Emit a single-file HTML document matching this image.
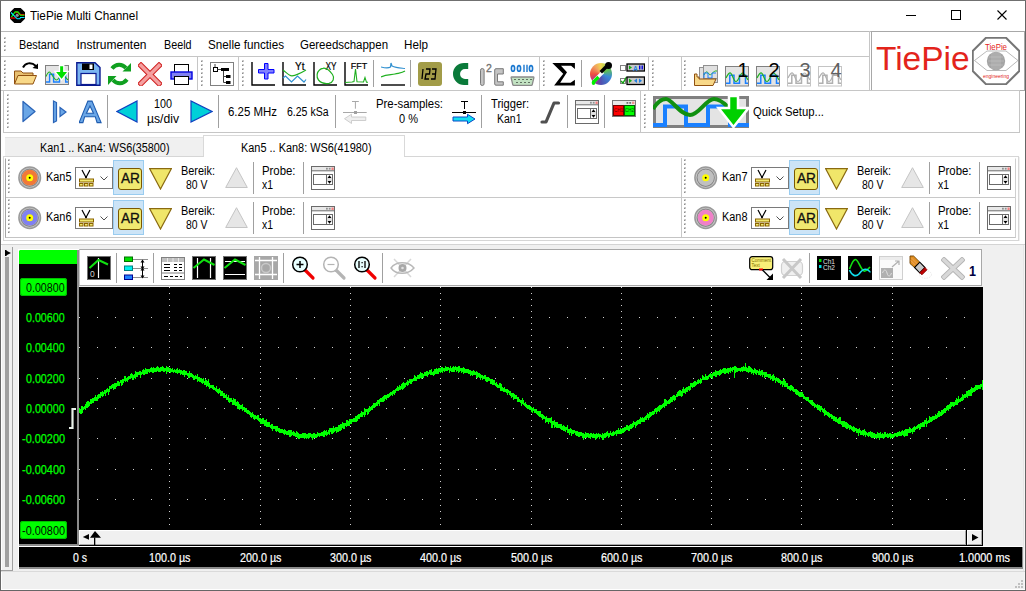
<!DOCTYPE html><html><head><meta charset="utf-8"><style>html,body{margin:0;padding:0;width:1026px;height:591px;overflow:hidden;background:#fff;}body{position:relative;font-family:"Liberation Sans",sans-serif;}div,span,svg{position:absolute;}span{white-space:nowrap;transform-origin:0 0;}</style></head><body><div style="left:0px;top:0px;width:1026px;height:591px;background:#ffffff;"></div><div style="left:1px;top:244px;width:1024px;height:346px;background:#f0f0f0;"></div><div style="left:1023px;top:245px;width:1px;height:326px;background:#e6e6e6;"></div><div style="left:1024px;top:245px;width:1px;height:345px;background:#f6f6f6;"></div><svg style="left:10px;top:7.5px;" width="15" height="15" viewBox="0 0 15 15"><polygon points="4.3,0 10.7,0 15,4.3 15,10.7 10.7,15 4.3,15 0,10.7 0,4.3" fill="#000"/><path d="M0.3,10 H5.7" stroke="#ff0000" stroke-width="1.2"/><path d="M5.3,4.5 H8.2 L10.5,6.8 H14.5" stroke="#ff0000" stroke-width="1.4" fill="none"/><path d="M1.4,9.1 L5.1,3.9 H7.9 L10.5,7.3 H14.5" stroke="#00ff00" stroke-width="1.1" fill="none"/><path d="M1,4.5 L7.2,10.8 H9.8 L10.5,9.5 H14.5" stroke="#00e8ff" stroke-width="1.1" fill="none"/><circle cx="7.2" cy="7.3" r="1.6" fill="#909090"/></svg><span style="left:30.00px;top:9.54px;font-size:12px;line-height:12px;color:#000;transform:scaleX(0.9794);">TiePie Multi Channel</span><div style="left:906px;top:15px;width:10px;height:1px;background:#000;"></div><div style="left:951px;top:10px;width:10px;height:10px;background:transparent;border:1px solid #000;box-sizing:border-box;"></div><svg style="left:997px;top:10px;" width="10" height="10" viewBox="0 0 10 10"><path d="M0.5,0.5 L9.5,9.5 M9.5,0.5 L0.5,9.5" stroke="#000" stroke-width="1.1"/></svg><div style="left:1px;top:31px;width:1024px;height:1px;background:#b9b9b9;"></div><div style="left:1px;top:56px;width:869px;height:1px;background:#c6c6c6;"></div><div style="left:1px;top:90px;width:869px;height:1px;background:#c6c6c6;"></div><div style="left:869px;top:31px;width:1px;height:60px;background:#c6c6c6;"></div><div style="left:871px;top:31px;width:154px;height:60px;background:#fff;border:1px solid #a8a8a8;box-sizing:border-box;"></div><svg style="left:4px;top:37px;" width="2" height="16" viewBox="0 0 2 16"><rect x="0" y="0" width="2" height="2" fill="#c8c8c8"/><rect x="0" y="1" width="1" height="1" fill="#8c8c8c"/><rect x="0" y="4" width="2" height="2" fill="#c8c8c8"/><rect x="0" y="5" width="1" height="1" fill="#8c8c8c"/><rect x="0" y="8" width="2" height="2" fill="#c8c8c8"/><rect x="0" y="9" width="1" height="1" fill="#8c8c8c"/><rect x="0" y="12" width="2" height="2" fill="#c8c8c8"/><rect x="0" y="13" width="1" height="1" fill="#8c8c8c"/></svg><span style="left:19.00px;top:38.84px;font-size:12px;line-height:12px;color:#000;transform:scaleX(0.9085);">Bestand</span><span style="left:76.50px;top:38.84px;font-size:12px;line-height:12px;color:#000;">Instrumenten</span><span style="left:163.50px;top:38.84px;font-size:12px;line-height:12px;color:#000;transform:scaleX(0.8961);">Beeld</span><span style="left:208.00px;top:38.84px;font-size:12px;line-height:12px;color:#000;transform:scaleX(0.9738);">Snelle functies</span><span style="left:300.00px;top:38.84px;font-size:12px;line-height:12px;color:#000;transform:scaleX(0.9559);">Gereedschappen</span><span style="left:404.00px;top:38.84px;font-size:12px;line-height:12px;color:#000;transform:scaleX(0.9725);">Help</span><div style="left:197px;top:57px;width:1px;height:33px;background:#c6c6c6;"></div><div style="left:238px;top:57px;width:1px;height:33px;background:#c6c6c6;"></div><div style="left:539px;top:57px;width:1px;height:33px;background:#c6c6c6;"></div><div style="left:648px;top:57px;width:1px;height:33px;background:#c6c6c6;"></div><div style="left:681px;top:57px;width:1px;height:33px;background:#c6c6c6;"></div><svg style="left:4px;top:60px;" width="2" height="27" viewBox="0 0 2 27"><rect x="0" y="0" width="2" height="2" fill="#c8c8c8"/><rect x="0" y="1" width="1" height="1" fill="#8c8c8c"/><rect x="0" y="4" width="2" height="2" fill="#c8c8c8"/><rect x="0" y="5" width="1" height="1" fill="#8c8c8c"/><rect x="0" y="8" width="2" height="2" fill="#c8c8c8"/><rect x="0" y="9" width="1" height="1" fill="#8c8c8c"/><rect x="0" y="12" width="2" height="2" fill="#c8c8c8"/><rect x="0" y="13" width="1" height="1" fill="#8c8c8c"/><rect x="0" y="16" width="2" height="2" fill="#c8c8c8"/><rect x="0" y="17" width="1" height="1" fill="#8c8c8c"/><rect x="0" y="20" width="2" height="2" fill="#c8c8c8"/><rect x="0" y="21" width="1" height="1" fill="#8c8c8c"/><rect x="0" y="24" width="2" height="2" fill="#c8c8c8"/><rect x="0" y="25" width="1" height="1" fill="#8c8c8c"/></svg><svg style="left:201px;top:60px;" width="2" height="27" viewBox="0 0 2 27"><rect x="0" y="0" width="2" height="2" fill="#c8c8c8"/><rect x="0" y="1" width="1" height="1" fill="#8c8c8c"/><rect x="0" y="4" width="2" height="2" fill="#c8c8c8"/><rect x="0" y="5" width="1" height="1" fill="#8c8c8c"/><rect x="0" y="8" width="2" height="2" fill="#c8c8c8"/><rect x="0" y="9" width="1" height="1" fill="#8c8c8c"/><rect x="0" y="12" width="2" height="2" fill="#c8c8c8"/><rect x="0" y="13" width="1" height="1" fill="#8c8c8c"/><rect x="0" y="16" width="2" height="2" fill="#c8c8c8"/><rect x="0" y="17" width="1" height="1" fill="#8c8c8c"/><rect x="0" y="20" width="2" height="2" fill="#c8c8c8"/><rect x="0" y="21" width="1" height="1" fill="#8c8c8c"/><rect x="0" y="24" width="2" height="2" fill="#c8c8c8"/><rect x="0" y="25" width="1" height="1" fill="#8c8c8c"/></svg><svg style="left:242px;top:60px;" width="2" height="27" viewBox="0 0 2 27"><rect x="0" y="0" width="2" height="2" fill="#c8c8c8"/><rect x="0" y="1" width="1" height="1" fill="#8c8c8c"/><rect x="0" y="4" width="2" height="2" fill="#c8c8c8"/><rect x="0" y="5" width="1" height="1" fill="#8c8c8c"/><rect x="0" y="8" width="2" height="2" fill="#c8c8c8"/><rect x="0" y="9" width="1" height="1" fill="#8c8c8c"/><rect x="0" y="12" width="2" height="2" fill="#c8c8c8"/><rect x="0" y="13" width="1" height="1" fill="#8c8c8c"/><rect x="0" y="16" width="2" height="2" fill="#c8c8c8"/><rect x="0" y="17" width="1" height="1" fill="#8c8c8c"/><rect x="0" y="20" width="2" height="2" fill="#c8c8c8"/><rect x="0" y="21" width="1" height="1" fill="#8c8c8c"/><rect x="0" y="24" width="2" height="2" fill="#c8c8c8"/><rect x="0" y="25" width="1" height="1" fill="#8c8c8c"/></svg><svg style="left:543px;top:60px;" width="2" height="27" viewBox="0 0 2 27"><rect x="0" y="0" width="2" height="2" fill="#c8c8c8"/><rect x="0" y="1" width="1" height="1" fill="#8c8c8c"/><rect x="0" y="4" width="2" height="2" fill="#c8c8c8"/><rect x="0" y="5" width="1" height="1" fill="#8c8c8c"/><rect x="0" y="8" width="2" height="2" fill="#c8c8c8"/><rect x="0" y="9" width="1" height="1" fill="#8c8c8c"/><rect x="0" y="12" width="2" height="2" fill="#c8c8c8"/><rect x="0" y="13" width="1" height="1" fill="#8c8c8c"/><rect x="0" y="16" width="2" height="2" fill="#c8c8c8"/><rect x="0" y="17" width="1" height="1" fill="#8c8c8c"/><rect x="0" y="20" width="2" height="2" fill="#c8c8c8"/><rect x="0" y="21" width="1" height="1" fill="#8c8c8c"/><rect x="0" y="24" width="2" height="2" fill="#c8c8c8"/><rect x="0" y="25" width="1" height="1" fill="#8c8c8c"/></svg><svg style="left:652px;top:60px;" width="2" height="27" viewBox="0 0 2 27"><rect x="0" y="0" width="2" height="2" fill="#c8c8c8"/><rect x="0" y="1" width="1" height="1" fill="#8c8c8c"/><rect x="0" y="4" width="2" height="2" fill="#c8c8c8"/><rect x="0" y="5" width="1" height="1" fill="#8c8c8c"/><rect x="0" y="8" width="2" height="2" fill="#c8c8c8"/><rect x="0" y="9" width="1" height="1" fill="#8c8c8c"/><rect x="0" y="12" width="2" height="2" fill="#c8c8c8"/><rect x="0" y="13" width="1" height="1" fill="#8c8c8c"/><rect x="0" y="16" width="2" height="2" fill="#c8c8c8"/><rect x="0" y="17" width="1" height="1" fill="#8c8c8c"/><rect x="0" y="20" width="2" height="2" fill="#c8c8c8"/><rect x="0" y="21" width="1" height="1" fill="#8c8c8c"/><rect x="0" y="24" width="2" height="2" fill="#c8c8c8"/><rect x="0" y="25" width="1" height="1" fill="#8c8c8c"/></svg><svg style="left:684px;top:60px;" width="2" height="27" viewBox="0 0 2 27"><rect x="0" y="0" width="2" height="2" fill="#c8c8c8"/><rect x="0" y="1" width="1" height="1" fill="#8c8c8c"/><rect x="0" y="4" width="2" height="2" fill="#c8c8c8"/><rect x="0" y="5" width="1" height="1" fill="#8c8c8c"/><rect x="0" y="8" width="2" height="2" fill="#c8c8c8"/><rect x="0" y="9" width="1" height="1" fill="#8c8c8c"/><rect x="0" y="12" width="2" height="2" fill="#c8c8c8"/><rect x="0" y="13" width="1" height="1" fill="#8c8c8c"/><rect x="0" y="16" width="2" height="2" fill="#c8c8c8"/><rect x="0" y="17" width="1" height="1" fill="#8c8c8c"/><rect x="0" y="20" width="2" height="2" fill="#c8c8c8"/><rect x="0" y="21" width="1" height="1" fill="#8c8c8c"/><rect x="0" y="24" width="2" height="2" fill="#c8c8c8"/><rect x="0" y="25" width="1" height="1" fill="#8c8c8c"/></svg><div style="left:373px;top:60px;width:1px;height:27px;background:#a0a0a0;"></div><div style="left:410px;top:60px;width:1px;height:27px;background:#a0a0a0;"></div><div style="left:581px;top:60px;width:1px;height:27px;background:#a0a0a0;"></div><div style="left:3px;top:90px;width:638px;height:43px;background:transparent;border:1px solid #c6c6c6;box-sizing:border-box;"></div><div style="left:640px;top:90px;width:380px;height:43px;background:transparent;border:1px solid #c6c6c6;box-sizing:border-box;"></div><svg style="left:7px;top:94px;" width="2" height="34" viewBox="0 0 2 34"><rect x="0" y="0" width="2" height="2" fill="#c8c8c8"/><rect x="0" y="1" width="1" height="1" fill="#8c8c8c"/><rect x="0" y="4" width="2" height="2" fill="#c8c8c8"/><rect x="0" y="5" width="1" height="1" fill="#8c8c8c"/><rect x="0" y="8" width="2" height="2" fill="#c8c8c8"/><rect x="0" y="9" width="1" height="1" fill="#8c8c8c"/><rect x="0" y="12" width="2" height="2" fill="#c8c8c8"/><rect x="0" y="13" width="1" height="1" fill="#8c8c8c"/><rect x="0" y="16" width="2" height="2" fill="#c8c8c8"/><rect x="0" y="17" width="1" height="1" fill="#8c8c8c"/><rect x="0" y="20" width="2" height="2" fill="#c8c8c8"/><rect x="0" y="21" width="1" height="1" fill="#8c8c8c"/><rect x="0" y="24" width="2" height="2" fill="#c8c8c8"/><rect x="0" y="25" width="1" height="1" fill="#8c8c8c"/><rect x="0" y="28" width="2" height="2" fill="#c8c8c8"/><rect x="0" y="29" width="1" height="1" fill="#8c8c8c"/><rect x="0" y="32" width="2" height="2" fill="#c8c8c8"/><rect x="0" y="33" width="1" height="1" fill="#8c8c8c"/></svg><svg style="left:644px;top:94px;" width="2" height="34" viewBox="0 0 2 34"><rect x="0" y="0" width="2" height="2" fill="#c8c8c8"/><rect x="0" y="1" width="1" height="1" fill="#8c8c8c"/><rect x="0" y="4" width="2" height="2" fill="#c8c8c8"/><rect x="0" y="5" width="1" height="1" fill="#8c8c8c"/><rect x="0" y="8" width="2" height="2" fill="#c8c8c8"/><rect x="0" y="9" width="1" height="1" fill="#8c8c8c"/><rect x="0" y="12" width="2" height="2" fill="#c8c8c8"/><rect x="0" y="13" width="1" height="1" fill="#8c8c8c"/><rect x="0" y="16" width="2" height="2" fill="#c8c8c8"/><rect x="0" y="17" width="1" height="1" fill="#8c8c8c"/><rect x="0" y="20" width="2" height="2" fill="#c8c8c8"/><rect x="0" y="21" width="1" height="1" fill="#8c8c8c"/><rect x="0" y="24" width="2" height="2" fill="#c8c8c8"/><rect x="0" y="25" width="1" height="1" fill="#8c8c8c"/><rect x="0" y="28" width="2" height="2" fill="#c8c8c8"/><rect x="0" y="29" width="1" height="1" fill="#8c8c8c"/><rect x="0" y="32" width="2" height="2" fill="#c8c8c8"/><rect x="0" y="33" width="1" height="1" fill="#8c8c8c"/></svg><div style="left:107px;top:95px;width:1px;height:33px;background:#a0a0a0;"></div><div style="left:218px;top:95px;width:1px;height:33px;background:#a0a0a0;"></div><div style="left:335px;top:95px;width:1px;height:33px;background:#a0a0a0;"></div><div style="left:481px;top:95px;width:1px;height:33px;background:#a0a0a0;"></div><div style="left:567px;top:95px;width:1px;height:33px;background:#a0a0a0;"></div><div style="left:604px;top:95px;width:1px;height:33px;background:#a0a0a0;"></div><span style="left:154.00px;top:98.34px;font-size:12px;line-height:12px;color:#000;transform:scaleX(0.8991);">100</span><span style="left:147.00px;top:113.14px;font-size:12px;line-height:12px;color:#000;transform:scaleX(1.0130);">µs/div</span><span style="left:228.00px;top:105.54px;font-size:12px;line-height:12px;color:#000;transform:scaleX(0.9543);">6.25 MHz</span><span style="left:287.00px;top:105.54px;font-size:12px;line-height:12px;color:#000;transform:scaleX(0.8762);">6.25 kSa</span><span style="left:375.50px;top:98.34px;font-size:12px;line-height:12px;color:#000;transform:scaleX(0.9479);">Pre-samples:</span><span style="left:399.00px;top:113.34px;font-size:12px;line-height:12px;color:#000;transform:scaleX(0.9189);">0 %</span><span style="left:490.50px;top:98.34px;font-size:12px;line-height:12px;color:#000;transform:scaleX(0.9292);">Trigger:</span><span style="left:496.75px;top:113.34px;font-size:12px;line-height:12px;color:#000;transform:scaleX(0.8743);">Kan1</span><span style="left:753.00px;top:105.84px;font-size:12px;line-height:12px;color:#000;transform:scaleX(0.9421);">Quick Setup...</span><div style="left:5px;top:137px;width:199px;height:20px;background:#f0f0f0;border-top:1px solid #e3e3e3;box-sizing:border-box;"></div><div style="left:203px;top:135px;width:202px;height:23px;background:#fff;border:1px solid #d9d9d9;border-bottom:none;box-sizing:border-box;"></div><span style="left:40.25px;top:141.54px;font-size:12px;line-height:12px;color:#000;transform:scaleX(0.9030);">Kan1 .. Kan4: WS6(35800)</span><span style="left:240.75px;top:141.54px;font-size:12px;line-height:12px;color:#000;transform:scaleX(0.9100);">Kan5 .. Kan8: WS6(41980)</span><div style="left:3px;top:156px;width:1016px;height:85px;background:#fff;border:1px solid #d6d6d6;box-sizing:border-box;"></div><div style="left:5px;top:158px;width:1011px;height:80px;background:#fff;border:1px solid #a6a6a6;border-top-color:#fff;border-right-color:#cfcfcf;border-bottom-color:#c4c4c4;box-sizing:border-box;"></div><div style="left:1019px;top:157px;width:1px;height:84px;background:#f0f0f0;"></div><div style="left:6px;top:197px;width:1009px;height:1px;background:#c8c8c8;"></div><div style="left:204px;top:156px;width:200px;height:1px;background:#fff;"></div><div style="left:681px;top:158px;width:1px;height:79px;background:#c8c8c8;"></div><div style="left:1px;top:244px;width:1024px;height:1px;background:#d4d4d4;"></div><svg style="left:8px;top:159px;" width="2" height="37" viewBox="0 0 2 37"><rect x="0" y="0" width="2" height="2" fill="#c8c8c8"/><rect x="0" y="1" width="1" height="1" fill="#8c8c8c"/><rect x="0" y="4" width="2" height="2" fill="#c8c8c8"/><rect x="0" y="5" width="1" height="1" fill="#8c8c8c"/><rect x="0" y="8" width="2" height="2" fill="#c8c8c8"/><rect x="0" y="9" width="1" height="1" fill="#8c8c8c"/><rect x="0" y="12" width="2" height="2" fill="#c8c8c8"/><rect x="0" y="13" width="1" height="1" fill="#8c8c8c"/><rect x="0" y="16" width="2" height="2" fill="#c8c8c8"/><rect x="0" y="17" width="1" height="1" fill="#8c8c8c"/><rect x="0" y="20" width="2" height="2" fill="#c8c8c8"/><rect x="0" y="21" width="1" height="1" fill="#8c8c8c"/><rect x="0" y="24" width="2" height="2" fill="#c8c8c8"/><rect x="0" y="25" width="1" height="1" fill="#8c8c8c"/><rect x="0" y="28" width="2" height="2" fill="#c8c8c8"/><rect x="0" y="29" width="1" height="1" fill="#8c8c8c"/><rect x="0" y="32" width="2" height="2" fill="#c8c8c8"/><rect x="0" y="33" width="1" height="1" fill="#8c8c8c"/></svg><svg style="left:18px;top:166px;" width="24" height="24" viewBox="0 0 24 24"><circle cx="11.7" cy="11.7" r="10.8" fill="#c8c8c8" stroke="#9a9a9a" stroke-width="1.5"/><circle cx="11.7" cy="11.7" r="8.6" fill="none" stroke="#8a8a8a" stroke-width="1.2"/><circle cx="11.7" cy="11.7" r="7.9" fill="#f07838"/><circle cx="11.7" cy="11.7" r="3.5" fill="#ffff00"/><circle cx="11.7" cy="11.7" r="1" fill="#000"/></svg><span style="left:45.50px;top:171.44px;font-size:12px;line-height:12px;color:#000;transform:scaleX(0.9099);">Kan5</span><div style="left:75px;top:167px;width:38px;height:22px;background:#fff;border:1px solid #7a7a7a;box-sizing:border-box;"></div><svg style="left:79px;top:169px;" width="30" height="18" viewBox="0 0 30 18"><path d="M3,1 L7,8.5 L11,1" stroke="#000" stroke-width="1.2" fill="none"/><circle cx="7" cy="8.3" r="0.9" fill="#000"/><rect x="0.5" y="10" width="14" height="3" fill="#f0e870" stroke="#8a6200" stroke-width="1"/><rect x="0.5" y="14.5" width="3.5" height="2.5" fill="#f0e870" stroke="#8a6200" stroke-width="1"/><rect x="5.5" y="14.5" width="3.5" height="2.5" fill="#f0e870" stroke="#8a6200" stroke-width="1"/><rect x="10.5" y="14.5" width="3.5" height="2.5" fill="#f0e870" stroke="#8a6200" stroke-width="1"/><path d="M21.5,7.5 L25,11 L28.5,7.5" stroke="#505050" stroke-width="1" fill="none"/></svg><div style="left:113px;top:160px;width:31px;height:35px;background:#cce4f7;border:1px solid #99ccf0;box-sizing:border-box;"></div><div style="left:118px;top:168px;width:24px;height:22px;background:#f0e870;border:1.4px solid #7a5800;border-radius:3px;box-sizing:border-box;"></div><span style="left:120.70px;top:171.35px;font-size:14px;line-height:14px;color:#101010;transform:scaleX(0.9769);-webkit-text-stroke:0.3px #101010;">AR</span><svg style="left:149px;top:168px;" width="23" height="22" viewBox="0 0 23 22"><polygon points="0.7,0.7 22.3,0.7 11.5,21" fill="#f0e66a" stroke="#8a6a10" stroke-width="1.2"/></svg><span style="left:180.50px;top:164.64px;font-size:12px;line-height:12px;color:#000;transform:scaleX(0.9104);">Bereik:</span><span style="left:186.00px;top:179.44px;font-size:12px;line-height:12px;color:#000;transform:scaleX(0.8669);">80 V</span><svg style="left:225px;top:167px;" width="23" height="22" viewBox="0 0 23 22"><polygon points="11.5,0.7 22.3,20.5 0.7,20.5" fill="#e6e6e6" stroke="#c4c4c4" stroke-width="1"/></svg><div style="left:253px;top:162px;width:1px;height:32px;background:#a0a0a0;"></div><span style="left:262.00px;top:164.64px;font-size:12px;line-height:12px;color:#000;transform:scaleX(0.9476);">Probe:</span><span style="left:262.00px;top:179.44px;font-size:12px;line-height:12px;color:#000;transform:scaleX(0.8680);">x1</span><div style="left:303px;top:162px;width:1px;height:32px;background:#a0a0a0;"></div><svg style="left:311px;top:166px;" width="24" height="24" viewBox="0 0 24 24"><rect x="0.5" y="0.5" width="23" height="23" fill="#fff" stroke="#6a6a6a"/><rect x="1" y="1" width="22" height="3.5" fill="#e8e8e8"/><rect x="15" y="1.8" width="1.8" height="1.8" fill="#909090"/><rect x="17.8" y="1.8" width="1.8" height="1.8" fill="#909090"/><rect x="20.5" y="1.5" width="2.2" height="2.5" fill="#f08080"/><line x1="1" y1="4.8" x2="23" y2="4.8" stroke="#6a6a6a"/><rect x="2.5" y="8.5" width="19" height="10" fill="#fff" stroke="#6a6a6a"/><line x1="15.5" y1="8.5" x2="15.5" y2="18.5" stroke="#6a6a6a"/><polygon points="16.5,12 20.5,12 18.5,9.3" fill="#000"/><polygon points="16.5,15 20.5,15 18.5,17.7" fill="#000"/><line x1="16" y1="12.8" x2="21" y2="12.8" stroke="#c0c0c0" stroke-width="0.8"/><line x1="16" y1="14.2" x2="21" y2="14.2" stroke="#c0c0c0" stroke-width="0.8"/></svg><svg style="left:8px;top:199px;" width="2" height="37" viewBox="0 0 2 37"><rect x="0" y="0" width="2" height="2" fill="#c8c8c8"/><rect x="0" y="1" width="1" height="1" fill="#8c8c8c"/><rect x="0" y="4" width="2" height="2" fill="#c8c8c8"/><rect x="0" y="5" width="1" height="1" fill="#8c8c8c"/><rect x="0" y="8" width="2" height="2" fill="#c8c8c8"/><rect x="0" y="9" width="1" height="1" fill="#8c8c8c"/><rect x="0" y="12" width="2" height="2" fill="#c8c8c8"/><rect x="0" y="13" width="1" height="1" fill="#8c8c8c"/><rect x="0" y="16" width="2" height="2" fill="#c8c8c8"/><rect x="0" y="17" width="1" height="1" fill="#8c8c8c"/><rect x="0" y="20" width="2" height="2" fill="#c8c8c8"/><rect x="0" y="21" width="1" height="1" fill="#8c8c8c"/><rect x="0" y="24" width="2" height="2" fill="#c8c8c8"/><rect x="0" y="25" width="1" height="1" fill="#8c8c8c"/><rect x="0" y="28" width="2" height="2" fill="#c8c8c8"/><rect x="0" y="29" width="1" height="1" fill="#8c8c8c"/><rect x="0" y="32" width="2" height="2" fill="#c8c8c8"/><rect x="0" y="33" width="1" height="1" fill="#8c8c8c"/></svg><svg style="left:18px;top:206px;" width="24" height="24" viewBox="0 0 24 24"><circle cx="11.7" cy="11.7" r="10.8" fill="#c8c8c8" stroke="#9a9a9a" stroke-width="1.5"/><circle cx="11.7" cy="11.7" r="8.6" fill="none" stroke="#8a8a8a" stroke-width="1.2"/><circle cx="11.7" cy="11.7" r="7.9" fill="#8080f0"/><circle cx="11.7" cy="11.7" r="3.5" fill="#ffff00"/><circle cx="11.7" cy="11.7" r="1" fill="#000"/></svg><span style="left:45.50px;top:211.44px;font-size:12px;line-height:12px;color:#000;transform:scaleX(0.9099);">Kan6</span><div style="left:75px;top:207px;width:38px;height:22px;background:#fff;border:1px solid #7a7a7a;box-sizing:border-box;"></div><svg style="left:79px;top:209px;" width="30" height="18" viewBox="0 0 30 18"><path d="M3,1 L7,8.5 L11,1" stroke="#000" stroke-width="1.2" fill="none"/><circle cx="7" cy="8.3" r="0.9" fill="#000"/><rect x="0.5" y="10" width="14" height="3" fill="#f0e870" stroke="#8a6200" stroke-width="1"/><rect x="0.5" y="14.5" width="3.5" height="2.5" fill="#f0e870" stroke="#8a6200" stroke-width="1"/><rect x="5.5" y="14.5" width="3.5" height="2.5" fill="#f0e870" stroke="#8a6200" stroke-width="1"/><rect x="10.5" y="14.5" width="3.5" height="2.5" fill="#f0e870" stroke="#8a6200" stroke-width="1"/><path d="M21.5,7.5 L25,11 L28.5,7.5" stroke="#505050" stroke-width="1" fill="none"/></svg><div style="left:113px;top:200px;width:31px;height:35px;background:#cce4f7;border:1px solid #99ccf0;box-sizing:border-box;"></div><div style="left:118px;top:208px;width:24px;height:22px;background:#f0e870;border:1.4px solid #7a5800;border-radius:3px;box-sizing:border-box;"></div><span style="left:120.70px;top:211.35px;font-size:14px;line-height:14px;color:#101010;transform:scaleX(0.9769);-webkit-text-stroke:0.3px #101010;">AR</span><svg style="left:149px;top:208px;" width="23" height="22" viewBox="0 0 23 22"><polygon points="0.7,0.7 22.3,0.7 11.5,21" fill="#f0e66a" stroke="#8a6a10" stroke-width="1.2"/></svg><span style="left:180.50px;top:204.64px;font-size:12px;line-height:12px;color:#000;transform:scaleX(0.9104);">Bereik:</span><span style="left:186.00px;top:219.44px;font-size:12px;line-height:12px;color:#000;transform:scaleX(0.8669);">80 V</span><svg style="left:225px;top:207px;" width="23" height="22" viewBox="0 0 23 22"><polygon points="11.5,0.7 22.3,20.5 0.7,20.5" fill="#e6e6e6" stroke="#c4c4c4" stroke-width="1"/></svg><div style="left:253px;top:202px;width:1px;height:32px;background:#a0a0a0;"></div><span style="left:262.00px;top:204.64px;font-size:12px;line-height:12px;color:#000;transform:scaleX(0.9476);">Probe:</span><span style="left:262.00px;top:219.44px;font-size:12px;line-height:12px;color:#000;transform:scaleX(0.8680);">x1</span><div style="left:303px;top:202px;width:1px;height:32px;background:#a0a0a0;"></div><svg style="left:311px;top:206px;" width="24" height="24" viewBox="0 0 24 24"><rect x="0.5" y="0.5" width="23" height="23" fill="#fff" stroke="#6a6a6a"/><rect x="1" y="1" width="22" height="3.5" fill="#e8e8e8"/><rect x="15" y="1.8" width="1.8" height="1.8" fill="#909090"/><rect x="17.8" y="1.8" width="1.8" height="1.8" fill="#909090"/><rect x="20.5" y="1.5" width="2.2" height="2.5" fill="#f08080"/><line x1="1" y1="4.8" x2="23" y2="4.8" stroke="#6a6a6a"/><rect x="2.5" y="8.5" width="19" height="10" fill="#fff" stroke="#6a6a6a"/><line x1="15.5" y1="8.5" x2="15.5" y2="18.5" stroke="#6a6a6a"/><polygon points="16.5,12 20.5,12 18.5,9.3" fill="#000"/><polygon points="16.5,15 20.5,15 18.5,17.7" fill="#000"/><line x1="16" y1="12.8" x2="21" y2="12.8" stroke="#c0c0c0" stroke-width="0.8"/><line x1="16" y1="14.2" x2="21" y2="14.2" stroke="#c0c0c0" stroke-width="0.8"/></svg><svg style="left:684px;top:159px;" width="2" height="37" viewBox="0 0 2 37"><rect x="0" y="0" width="2" height="2" fill="#c8c8c8"/><rect x="0" y="1" width="1" height="1" fill="#8c8c8c"/><rect x="0" y="4" width="2" height="2" fill="#c8c8c8"/><rect x="0" y="5" width="1" height="1" fill="#8c8c8c"/><rect x="0" y="8" width="2" height="2" fill="#c8c8c8"/><rect x="0" y="9" width="1" height="1" fill="#8c8c8c"/><rect x="0" y="12" width="2" height="2" fill="#c8c8c8"/><rect x="0" y="13" width="1" height="1" fill="#8c8c8c"/><rect x="0" y="16" width="2" height="2" fill="#c8c8c8"/><rect x="0" y="17" width="1" height="1" fill="#8c8c8c"/><rect x="0" y="20" width="2" height="2" fill="#c8c8c8"/><rect x="0" y="21" width="1" height="1" fill="#8c8c8c"/><rect x="0" y="24" width="2" height="2" fill="#c8c8c8"/><rect x="0" y="25" width="1" height="1" fill="#8c8c8c"/><rect x="0" y="28" width="2" height="2" fill="#c8c8c8"/><rect x="0" y="29" width="1" height="1" fill="#8c8c8c"/><rect x="0" y="32" width="2" height="2" fill="#c8c8c8"/><rect x="0" y="33" width="1" height="1" fill="#8c8c8c"/></svg><svg style="left:694px;top:166px;" width="24" height="24" viewBox="0 0 24 24"><circle cx="11.7" cy="11.7" r="10.8" fill="#c8c8c8" stroke="#9a9a9a" stroke-width="1.5"/><circle cx="11.7" cy="11.7" r="8.6" fill="none" stroke="#8a8a8a" stroke-width="1.2"/><circle cx="11.7" cy="11.7" r="7.9" fill="#c0c0c0"/><circle cx="11.7" cy="11.7" r="3.5" fill="#ffff00"/><circle cx="11.7" cy="11.7" r="1" fill="#000"/></svg><span style="left:721.50px;top:171.44px;font-size:12px;line-height:12px;color:#000;transform:scaleX(0.9099);">Kan7</span><div style="left:751px;top:167px;width:38px;height:22px;background:#fff;border:1px solid #7a7a7a;box-sizing:border-box;"></div><svg style="left:755px;top:169px;" width="30" height="18" viewBox="0 0 30 18"><path d="M3,1 L7,8.5 L11,1" stroke="#000" stroke-width="1.2" fill="none"/><circle cx="7" cy="8.3" r="0.9" fill="#000"/><rect x="0.5" y="10" width="14" height="3" fill="#f0e870" stroke="#8a6200" stroke-width="1"/><rect x="0.5" y="14.5" width="3.5" height="2.5" fill="#f0e870" stroke="#8a6200" stroke-width="1"/><rect x="5.5" y="14.5" width="3.5" height="2.5" fill="#f0e870" stroke="#8a6200" stroke-width="1"/><rect x="10.5" y="14.5" width="3.5" height="2.5" fill="#f0e870" stroke="#8a6200" stroke-width="1"/><path d="M21.5,7.5 L25,11 L28.5,7.5" stroke="#505050" stroke-width="1" fill="none"/></svg><div style="left:789px;top:160px;width:31px;height:35px;background:#cce4f7;border:1px solid #99ccf0;box-sizing:border-box;"></div><div style="left:794px;top:168px;width:24px;height:22px;background:#f0e870;border:1.4px solid #7a5800;border-radius:3px;box-sizing:border-box;"></div><span style="left:796.70px;top:171.35px;font-size:14px;line-height:14px;color:#101010;transform:scaleX(0.9769);-webkit-text-stroke:0.3px #101010;">AR</span><svg style="left:825px;top:168px;" width="23" height="22" viewBox="0 0 23 22"><polygon points="0.7,0.7 22.3,0.7 11.5,21" fill="#f0e66a" stroke="#8a6a10" stroke-width="1.2"/></svg><span style="left:856.50px;top:164.64px;font-size:12px;line-height:12px;color:#000;transform:scaleX(0.9104);">Bereik:</span><span style="left:862.00px;top:179.44px;font-size:12px;line-height:12px;color:#000;transform:scaleX(0.8669);">80 V</span><svg style="left:901px;top:167px;" width="23" height="22" viewBox="0 0 23 22"><polygon points="11.5,0.7 22.3,20.5 0.7,20.5" fill="#e6e6e6" stroke="#c4c4c4" stroke-width="1"/></svg><div style="left:929px;top:162px;width:1px;height:32px;background:#a0a0a0;"></div><span style="left:938.00px;top:164.64px;font-size:12px;line-height:12px;color:#000;transform:scaleX(0.9476);">Probe:</span><span style="left:938.00px;top:179.44px;font-size:12px;line-height:12px;color:#000;transform:scaleX(0.8680);">x1</span><div style="left:979px;top:162px;width:1px;height:32px;background:#a0a0a0;"></div><svg style="left:987px;top:166px;" width="24" height="24" viewBox="0 0 24 24"><rect x="0.5" y="0.5" width="23" height="23" fill="#fff" stroke="#6a6a6a"/><rect x="1" y="1" width="22" height="3.5" fill="#e8e8e8"/><rect x="15" y="1.8" width="1.8" height="1.8" fill="#909090"/><rect x="17.8" y="1.8" width="1.8" height="1.8" fill="#909090"/><rect x="20.5" y="1.5" width="2.2" height="2.5" fill="#f08080"/><line x1="1" y1="4.8" x2="23" y2="4.8" stroke="#6a6a6a"/><rect x="2.5" y="8.5" width="19" height="10" fill="#fff" stroke="#6a6a6a"/><line x1="15.5" y1="8.5" x2="15.5" y2="18.5" stroke="#6a6a6a"/><polygon points="16.5,12 20.5,12 18.5,9.3" fill="#000"/><polygon points="16.5,15 20.5,15 18.5,17.7" fill="#000"/><line x1="16" y1="12.8" x2="21" y2="12.8" stroke="#c0c0c0" stroke-width="0.8"/><line x1="16" y1="14.2" x2="21" y2="14.2" stroke="#c0c0c0" stroke-width="0.8"/></svg><svg style="left:684px;top:199px;" width="2" height="37" viewBox="0 0 2 37"><rect x="0" y="0" width="2" height="2" fill="#c8c8c8"/><rect x="0" y="1" width="1" height="1" fill="#8c8c8c"/><rect x="0" y="4" width="2" height="2" fill="#c8c8c8"/><rect x="0" y="5" width="1" height="1" fill="#8c8c8c"/><rect x="0" y="8" width="2" height="2" fill="#c8c8c8"/><rect x="0" y="9" width="1" height="1" fill="#8c8c8c"/><rect x="0" y="12" width="2" height="2" fill="#c8c8c8"/><rect x="0" y="13" width="1" height="1" fill="#8c8c8c"/><rect x="0" y="16" width="2" height="2" fill="#c8c8c8"/><rect x="0" y="17" width="1" height="1" fill="#8c8c8c"/><rect x="0" y="20" width="2" height="2" fill="#c8c8c8"/><rect x="0" y="21" width="1" height="1" fill="#8c8c8c"/><rect x="0" y="24" width="2" height="2" fill="#c8c8c8"/><rect x="0" y="25" width="1" height="1" fill="#8c8c8c"/><rect x="0" y="28" width="2" height="2" fill="#c8c8c8"/><rect x="0" y="29" width="1" height="1" fill="#8c8c8c"/><rect x="0" y="32" width="2" height="2" fill="#c8c8c8"/><rect x="0" y="33" width="1" height="1" fill="#8c8c8c"/></svg><svg style="left:694px;top:206px;" width="24" height="24" viewBox="0 0 24 24"><circle cx="11.7" cy="11.7" r="10.8" fill="#c8c8c8" stroke="#9a9a9a" stroke-width="1.5"/><circle cx="11.7" cy="11.7" r="8.6" fill="none" stroke="#8a8a8a" stroke-width="1.2"/><circle cx="11.7" cy="11.7" r="7.9" fill="#f080c8"/><circle cx="11.7" cy="11.7" r="3.5" fill="#ffff00"/><circle cx="11.7" cy="11.7" r="1" fill="#000"/></svg><span style="left:721.50px;top:211.44px;font-size:12px;line-height:12px;color:#000;transform:scaleX(0.9099);">Kan8</span><div style="left:751px;top:207px;width:38px;height:22px;background:#fff;border:1px solid #7a7a7a;box-sizing:border-box;"></div><svg style="left:755px;top:209px;" width="30" height="18" viewBox="0 0 30 18"><path d="M3,1 L7,8.5 L11,1" stroke="#000" stroke-width="1.2" fill="none"/><circle cx="7" cy="8.3" r="0.9" fill="#000"/><rect x="0.5" y="10" width="14" height="3" fill="#f0e870" stroke="#8a6200" stroke-width="1"/><rect x="0.5" y="14.5" width="3.5" height="2.5" fill="#f0e870" stroke="#8a6200" stroke-width="1"/><rect x="5.5" y="14.5" width="3.5" height="2.5" fill="#f0e870" stroke="#8a6200" stroke-width="1"/><rect x="10.5" y="14.5" width="3.5" height="2.5" fill="#f0e870" stroke="#8a6200" stroke-width="1"/><path d="M21.5,7.5 L25,11 L28.5,7.5" stroke="#505050" stroke-width="1" fill="none"/></svg><div style="left:789px;top:200px;width:31px;height:35px;background:#cce4f7;border:1px solid #99ccf0;box-sizing:border-box;"></div><div style="left:794px;top:208px;width:24px;height:22px;background:#f0e870;border:1.4px solid #7a5800;border-radius:3px;box-sizing:border-box;"></div><span style="left:796.70px;top:211.35px;font-size:14px;line-height:14px;color:#101010;transform:scaleX(0.9769);-webkit-text-stroke:0.3px #101010;">AR</span><svg style="left:825px;top:208px;" width="23" height="22" viewBox="0 0 23 22"><polygon points="0.7,0.7 22.3,0.7 11.5,21" fill="#f0e66a" stroke="#8a6a10" stroke-width="1.2"/></svg><span style="left:856.50px;top:204.64px;font-size:12px;line-height:12px;color:#000;transform:scaleX(0.9104);">Bereik:</span><span style="left:862.00px;top:219.44px;font-size:12px;line-height:12px;color:#000;transform:scaleX(0.8669);">80 V</span><svg style="left:901px;top:207px;" width="23" height="22" viewBox="0 0 23 22"><polygon points="11.5,0.7 22.3,20.5 0.7,20.5" fill="#e6e6e6" stroke="#c4c4c4" stroke-width="1"/></svg><div style="left:929px;top:202px;width:1px;height:32px;background:#a0a0a0;"></div><span style="left:938.00px;top:204.64px;font-size:12px;line-height:12px;color:#000;transform:scaleX(0.9476);">Probe:</span><span style="left:938.00px;top:219.44px;font-size:12px;line-height:12px;color:#000;transform:scaleX(0.8680);">x1</span><div style="left:979px;top:202px;width:1px;height:32px;background:#a0a0a0;"></div><svg style="left:987px;top:206px;" width="24" height="24" viewBox="0 0 24 24"><rect x="0.5" y="0.5" width="23" height="23" fill="#fff" stroke="#6a6a6a"/><rect x="1" y="1" width="22" height="3.5" fill="#e8e8e8"/><rect x="15" y="1.8" width="1.8" height="1.8" fill="#909090"/><rect x="17.8" y="1.8" width="1.8" height="1.8" fill="#909090"/><rect x="20.5" y="1.5" width="2.2" height="2.5" fill="#f08080"/><line x1="1" y1="4.8" x2="23" y2="4.8" stroke="#6a6a6a"/><rect x="2.5" y="8.5" width="19" height="10" fill="#fff" stroke="#6a6a6a"/><line x1="15.5" y1="8.5" x2="15.5" y2="18.5" stroke="#6a6a6a"/><polygon points="16.5,12 20.5,12 18.5,9.3" fill="#000"/><polygon points="16.5,15 20.5,15 18.5,17.7" fill="#000"/><line x1="16" y1="12.8" x2="21" y2="12.8" stroke="#c0c0c0" stroke-width="0.8"/><line x1="16" y1="14.2" x2="21" y2="14.2" stroke="#c0c0c0" stroke-width="0.8"/></svg><div style="left:1px;top:245px;width:1px;height:345px;background:#ffffff;"></div><div style="left:12px;top:247px;width:1px;height:324px;background:#a0a0a0;"></div><div style="left:1px;top:570px;width:12px;height:1px;background:#a0a0a0;"></div><svg style="left:5px;top:250px;" width="6" height="6" viewBox="0 0 6 6"><polygon points="0,0 6,3 0,6" fill="#000"/><rect x="0" y="0" width="1.5" height="6" fill="#000"/></svg><div style="left:5px;top:257px;width:4px;height:310px;background:#a0a0a0;"></div><div style="left:18px;top:249px;width:61px;height:297px;background:#fff;"></div><div style="left:19px;top:250px;width:60px;height:296px;background:#8c8c8c;"></div><div style="left:19px;top:250px;width:58px;height:294px;background:#000;"></div><div style="left:19px;top:250px;width:58px;height:14px;background:#00ff00;"></div><div style="left:19px;top:250px;width:1px;height:1px;background:#80ff80;"></div><div style="left:79px;top:249px;width:903px;height:37px;background:#fff;border:1px solid #a8a8a8;border-left-color:#c8c8c8;box-sizing:border-box;"></div><div style="left:79px;top:287px;width:904px;height:259px;background:#000;"></div><div style="left:79px;top:530px;width:887px;height:15px;background:#f0f0f0;border-top:1px solid #fff;border-left:1px solid #fff;border-bottom:1px solid #a8a8a8;border-right:1px solid #a8a8a8;box-sizing:border-box;"></div><div style="left:967px;top:530px;width:15px;height:15px;background:#f0f0f0;border-top:1px solid #fff;border-left:1px solid #fff;border-bottom:1px solid #a8a8a8;border-right:1px solid #a8a8a8;box-sizing:border-box;"></div><svg style="left:972px;top:534px;" width="7" height="7" viewBox="0 0 7 7"><polygon points="0,0 6.5,3.5 0,7" fill="#000"/></svg><svg style="left:82px;top:530px;" width="21" height="16" viewBox="0 0 21 16"><polygon points="0.8,7 7,4 7,9.8" fill="#000"/><polygon points="8,7.7 13,1 19,7.7" fill="#000"/><rect x="12" y="7.5" width="1.3" height="8" fill="#000"/></svg><div style="left:18px;top:546px;width:1005px;height:23px;background:#fff;"></div><div style="left:19px;top:547px;width:1004px;height:22px;background:#8c8c8c;"></div><div style="left:19px;top:547px;width:1003px;height:20px;background:#000;"></div><svg style="left:0px;top:0px;" width="1026" height="591" viewBox="0 0 1026 591"><path d="M169,287h1v1h-1zM169,293h1v1h-1zM169,299h1v1h-1zM169,305h1v1h-1zM169,311h1v1h-1zM169,317h1v1h-1zM169,323h1v1h-1zM169,329h1v1h-1zM169,335h1v1h-1zM169,341h1v1h-1zM169,347h1v1h-1zM169,353h1v1h-1zM169,359h1v1h-1zM169,366h1v1h-1zM169,372h1v1h-1zM169,378h1v1h-1zM169,384h1v1h-1zM169,390h1v1h-1zM169,396h1v1h-1zM169,402h1v1h-1zM169,408h1v1h-1zM169,414h1v1h-1zM169,420h1v1h-1zM169,426h1v1h-1zM169,432h1v1h-1zM169,438h1v1h-1zM169,444h1v1h-1zM169,450h1v1h-1zM169,457h1v1h-1zM169,463h1v1h-1zM169,469h1v1h-1zM169,475h1v1h-1zM169,481h1v1h-1zM169,487h1v1h-1zM169,493h1v1h-1zM169,499h1v1h-1zM169,505h1v1h-1zM169,511h1v1h-1zM169,518h1v1h-1zM169,524h1v1h-1zM260,287h1v1h-1zM260,293h1v1h-1zM260,299h1v1h-1zM260,305h1v1h-1zM260,311h1v1h-1zM260,317h1v1h-1zM260,323h1v1h-1zM260,329h1v1h-1zM260,335h1v1h-1zM260,341h1v1h-1zM260,347h1v1h-1zM260,353h1v1h-1zM260,359h1v1h-1zM260,366h1v1h-1zM260,372h1v1h-1zM260,378h1v1h-1zM260,384h1v1h-1zM260,390h1v1h-1zM260,396h1v1h-1zM260,402h1v1h-1zM260,408h1v1h-1zM260,414h1v1h-1zM260,420h1v1h-1zM260,426h1v1h-1zM260,432h1v1h-1zM260,438h1v1h-1zM260,444h1v1h-1zM260,450h1v1h-1zM260,457h1v1h-1zM260,463h1v1h-1zM260,469h1v1h-1zM260,475h1v1h-1zM260,481h1v1h-1zM260,487h1v1h-1zM260,493h1v1h-1zM260,499h1v1h-1zM260,505h1v1h-1zM260,511h1v1h-1zM260,518h1v1h-1zM260,524h1v1h-1zM350,287h1v1h-1zM350,293h1v1h-1zM350,299h1v1h-1zM350,305h1v1h-1zM350,311h1v1h-1zM350,317h1v1h-1zM350,323h1v1h-1zM350,329h1v1h-1zM350,335h1v1h-1zM350,341h1v1h-1zM350,347h1v1h-1zM350,353h1v1h-1zM350,359h1v1h-1zM350,366h1v1h-1zM350,372h1v1h-1zM350,378h1v1h-1zM350,384h1v1h-1zM350,390h1v1h-1zM350,396h1v1h-1zM350,402h1v1h-1zM350,408h1v1h-1zM350,414h1v1h-1zM350,420h1v1h-1zM350,426h1v1h-1zM350,432h1v1h-1zM350,438h1v1h-1zM350,444h1v1h-1zM350,450h1v1h-1zM350,457h1v1h-1zM350,463h1v1h-1zM350,469h1v1h-1zM350,475h1v1h-1zM350,481h1v1h-1zM350,487h1v1h-1zM350,493h1v1h-1zM350,499h1v1h-1zM350,505h1v1h-1zM350,511h1v1h-1zM350,518h1v1h-1zM350,524h1v1h-1zM440,287h1v1h-1zM440,293h1v1h-1zM440,299h1v1h-1zM440,305h1v1h-1zM440,311h1v1h-1zM440,317h1v1h-1zM440,323h1v1h-1zM440,329h1v1h-1zM440,335h1v1h-1zM440,341h1v1h-1zM440,347h1v1h-1zM440,353h1v1h-1zM440,359h1v1h-1zM440,366h1v1h-1zM440,372h1v1h-1zM440,378h1v1h-1zM440,384h1v1h-1zM440,390h1v1h-1zM440,396h1v1h-1zM440,402h1v1h-1zM440,408h1v1h-1zM440,414h1v1h-1zM440,420h1v1h-1zM440,426h1v1h-1zM440,432h1v1h-1zM440,438h1v1h-1zM440,444h1v1h-1zM440,450h1v1h-1zM440,457h1v1h-1zM440,463h1v1h-1zM440,469h1v1h-1zM440,475h1v1h-1zM440,481h1v1h-1zM440,487h1v1h-1zM440,493h1v1h-1zM440,499h1v1h-1zM440,505h1v1h-1zM440,511h1v1h-1zM440,518h1v1h-1zM440,524h1v1h-1zM531,287h1v1h-1zM531,293h1v1h-1zM531,299h1v1h-1zM531,305h1v1h-1zM531,311h1v1h-1zM531,317h1v1h-1zM531,323h1v1h-1zM531,329h1v1h-1zM531,335h1v1h-1zM531,341h1v1h-1zM531,347h1v1h-1zM531,353h1v1h-1zM531,359h1v1h-1zM531,366h1v1h-1zM531,372h1v1h-1zM531,378h1v1h-1zM531,384h1v1h-1zM531,390h1v1h-1zM531,396h1v1h-1zM531,402h1v1h-1zM531,408h1v1h-1zM531,414h1v1h-1zM531,420h1v1h-1zM531,426h1v1h-1zM531,432h1v1h-1zM531,438h1v1h-1zM531,444h1v1h-1zM531,450h1v1h-1zM531,457h1v1h-1zM531,463h1v1h-1zM531,469h1v1h-1zM531,475h1v1h-1zM531,481h1v1h-1zM531,487h1v1h-1zM531,493h1v1h-1zM531,499h1v1h-1zM531,505h1v1h-1zM531,511h1v1h-1zM531,518h1v1h-1zM531,524h1v1h-1zM621,287h1v1h-1zM621,293h1v1h-1zM621,299h1v1h-1zM621,305h1v1h-1zM621,311h1v1h-1zM621,317h1v1h-1zM621,323h1v1h-1zM621,329h1v1h-1zM621,335h1v1h-1zM621,341h1v1h-1zM621,347h1v1h-1zM621,353h1v1h-1zM621,359h1v1h-1zM621,366h1v1h-1zM621,372h1v1h-1zM621,378h1v1h-1zM621,384h1v1h-1zM621,390h1v1h-1zM621,396h1v1h-1zM621,402h1v1h-1zM621,408h1v1h-1zM621,414h1v1h-1zM621,420h1v1h-1zM621,426h1v1h-1zM621,432h1v1h-1zM621,438h1v1h-1zM621,444h1v1h-1zM621,450h1v1h-1zM621,457h1v1h-1zM621,463h1v1h-1zM621,469h1v1h-1zM621,475h1v1h-1zM621,481h1v1h-1zM621,487h1v1h-1zM621,493h1v1h-1zM621,499h1v1h-1zM621,505h1v1h-1zM621,511h1v1h-1zM621,518h1v1h-1zM621,524h1v1h-1zM711,287h1v1h-1zM711,293h1v1h-1zM711,299h1v1h-1zM711,305h1v1h-1zM711,311h1v1h-1zM711,317h1v1h-1zM711,323h1v1h-1zM711,329h1v1h-1zM711,335h1v1h-1zM711,341h1v1h-1zM711,347h1v1h-1zM711,353h1v1h-1zM711,359h1v1h-1zM711,366h1v1h-1zM711,372h1v1h-1zM711,378h1v1h-1zM711,384h1v1h-1zM711,390h1v1h-1zM711,396h1v1h-1zM711,402h1v1h-1zM711,408h1v1h-1zM711,414h1v1h-1zM711,420h1v1h-1zM711,426h1v1h-1zM711,432h1v1h-1zM711,438h1v1h-1zM711,444h1v1h-1zM711,450h1v1h-1zM711,457h1v1h-1zM711,463h1v1h-1zM711,469h1v1h-1zM711,475h1v1h-1zM711,481h1v1h-1zM711,487h1v1h-1zM711,493h1v1h-1zM711,499h1v1h-1zM711,505h1v1h-1zM711,511h1v1h-1zM711,518h1v1h-1zM711,524h1v1h-1zM801,287h1v1h-1zM801,293h1v1h-1zM801,299h1v1h-1zM801,305h1v1h-1zM801,311h1v1h-1zM801,317h1v1h-1zM801,323h1v1h-1zM801,329h1v1h-1zM801,335h1v1h-1zM801,341h1v1h-1zM801,347h1v1h-1zM801,353h1v1h-1zM801,359h1v1h-1zM801,366h1v1h-1zM801,372h1v1h-1zM801,378h1v1h-1zM801,384h1v1h-1zM801,390h1v1h-1zM801,396h1v1h-1zM801,402h1v1h-1zM801,408h1v1h-1zM801,414h1v1h-1zM801,420h1v1h-1zM801,426h1v1h-1zM801,432h1v1h-1zM801,438h1v1h-1zM801,444h1v1h-1zM801,450h1v1h-1zM801,457h1v1h-1zM801,463h1v1h-1zM801,469h1v1h-1zM801,475h1v1h-1zM801,481h1v1h-1zM801,487h1v1h-1zM801,493h1v1h-1zM801,499h1v1h-1zM801,505h1v1h-1zM801,511h1v1h-1zM801,518h1v1h-1zM801,524h1v1h-1zM892,287h1v1h-1zM892,293h1v1h-1zM892,299h1v1h-1zM892,305h1v1h-1zM892,311h1v1h-1zM892,317h1v1h-1zM892,323h1v1h-1zM892,329h1v1h-1zM892,335h1v1h-1zM892,341h1v1h-1zM892,347h1v1h-1zM892,353h1v1h-1zM892,359h1v1h-1zM892,366h1v1h-1zM892,372h1v1h-1zM892,378h1v1h-1zM892,384h1v1h-1zM892,390h1v1h-1zM892,396h1v1h-1zM892,402h1v1h-1zM892,408h1v1h-1zM892,414h1v1h-1zM892,420h1v1h-1zM892,426h1v1h-1zM892,432h1v1h-1zM892,438h1v1h-1zM892,444h1v1h-1zM892,450h1v1h-1zM892,457h1v1h-1zM892,463h1v1h-1zM892,469h1v1h-1zM892,475h1v1h-1zM892,481h1v1h-1zM892,487h1v1h-1zM892,493h1v1h-1zM892,499h1v1h-1zM892,505h1v1h-1zM892,511h1v1h-1zM892,518h1v1h-1zM892,524h1v1h-1zM79,317h1v1h-1zM97,317h1v1h-1zM115,317h1v1h-1zM133,317h1v1h-1zM151,317h1v1h-1zM187,317h1v1h-1zM205,317h1v1h-1zM224,317h1v1h-1zM242,317h1v1h-1zM278,317h1v1h-1zM296,317h1v1h-1zM314,317h1v1h-1zM332,317h1v1h-1zM368,317h1v1h-1zM386,317h1v1h-1zM404,317h1v1h-1zM422,317h1v1h-1zM458,317h1v1h-1zM476,317h1v1h-1zM495,317h1v1h-1zM513,317h1v1h-1zM549,317h1v1h-1zM567,317h1v1h-1zM585,317h1v1h-1zM603,317h1v1h-1zM639,317h1v1h-1zM657,317h1v1h-1zM675,317h1v1h-1zM693,317h1v1h-1zM729,317h1v1h-1zM747,317h1v1h-1zM765,317h1v1h-1zM783,317h1v1h-1zM819,317h1v1h-1zM837,317h1v1h-1zM856,317h1v1h-1zM874,317h1v1h-1zM910,317h1v1h-1zM928,317h1v1h-1zM946,317h1v1h-1zM964,317h1v1h-1zM79,347h1v1h-1zM97,347h1v1h-1zM115,347h1v1h-1zM133,347h1v1h-1zM151,347h1v1h-1zM187,347h1v1h-1zM205,347h1v1h-1zM224,347h1v1h-1zM242,347h1v1h-1zM278,347h1v1h-1zM296,347h1v1h-1zM314,347h1v1h-1zM332,347h1v1h-1zM368,347h1v1h-1zM386,347h1v1h-1zM404,347h1v1h-1zM422,347h1v1h-1zM458,347h1v1h-1zM476,347h1v1h-1zM495,347h1v1h-1zM513,347h1v1h-1zM549,347h1v1h-1zM567,347h1v1h-1zM585,347h1v1h-1zM603,347h1v1h-1zM639,347h1v1h-1zM657,347h1v1h-1zM675,347h1v1h-1zM693,347h1v1h-1zM729,347h1v1h-1zM747,347h1v1h-1zM765,347h1v1h-1zM783,347h1v1h-1zM819,347h1v1h-1zM837,347h1v1h-1zM856,347h1v1h-1zM874,347h1v1h-1zM910,347h1v1h-1zM928,347h1v1h-1zM946,347h1v1h-1zM964,347h1v1h-1zM79,378h1v1h-1zM97,378h1v1h-1zM115,378h1v1h-1zM133,378h1v1h-1zM151,378h1v1h-1zM187,378h1v1h-1zM205,378h1v1h-1zM224,378h1v1h-1zM242,378h1v1h-1zM278,378h1v1h-1zM296,378h1v1h-1zM314,378h1v1h-1zM332,378h1v1h-1zM368,378h1v1h-1zM386,378h1v1h-1zM404,378h1v1h-1zM422,378h1v1h-1zM458,378h1v1h-1zM476,378h1v1h-1zM495,378h1v1h-1zM513,378h1v1h-1zM549,378h1v1h-1zM567,378h1v1h-1zM585,378h1v1h-1zM603,378h1v1h-1zM639,378h1v1h-1zM657,378h1v1h-1zM675,378h1v1h-1zM693,378h1v1h-1zM729,378h1v1h-1zM747,378h1v1h-1zM765,378h1v1h-1zM783,378h1v1h-1zM819,378h1v1h-1zM837,378h1v1h-1zM856,378h1v1h-1zM874,378h1v1h-1zM910,378h1v1h-1zM928,378h1v1h-1zM946,378h1v1h-1zM964,378h1v1h-1zM79,408h1v1h-1zM97,408h1v1h-1zM115,408h1v1h-1zM133,408h1v1h-1zM151,408h1v1h-1zM187,408h1v1h-1zM205,408h1v1h-1zM224,408h1v1h-1zM242,408h1v1h-1zM278,408h1v1h-1zM296,408h1v1h-1zM314,408h1v1h-1zM332,408h1v1h-1zM368,408h1v1h-1zM386,408h1v1h-1zM404,408h1v1h-1zM422,408h1v1h-1zM458,408h1v1h-1zM476,408h1v1h-1zM495,408h1v1h-1zM513,408h1v1h-1zM549,408h1v1h-1zM567,408h1v1h-1zM585,408h1v1h-1zM603,408h1v1h-1zM639,408h1v1h-1zM657,408h1v1h-1zM675,408h1v1h-1zM693,408h1v1h-1zM729,408h1v1h-1zM747,408h1v1h-1zM765,408h1v1h-1zM783,408h1v1h-1zM819,408h1v1h-1zM837,408h1v1h-1zM856,408h1v1h-1zM874,408h1v1h-1zM910,408h1v1h-1zM928,408h1v1h-1zM946,408h1v1h-1zM964,408h1v1h-1zM79,438h1v1h-1zM97,438h1v1h-1zM115,438h1v1h-1zM133,438h1v1h-1zM151,438h1v1h-1zM187,438h1v1h-1zM205,438h1v1h-1zM224,438h1v1h-1zM242,438h1v1h-1zM278,438h1v1h-1zM296,438h1v1h-1zM314,438h1v1h-1zM332,438h1v1h-1zM368,438h1v1h-1zM386,438h1v1h-1zM404,438h1v1h-1zM422,438h1v1h-1zM458,438h1v1h-1zM476,438h1v1h-1zM495,438h1v1h-1zM513,438h1v1h-1zM549,438h1v1h-1zM567,438h1v1h-1zM585,438h1v1h-1zM603,438h1v1h-1zM639,438h1v1h-1zM657,438h1v1h-1zM675,438h1v1h-1zM693,438h1v1h-1zM729,438h1v1h-1zM747,438h1v1h-1zM765,438h1v1h-1zM783,438h1v1h-1zM819,438h1v1h-1zM837,438h1v1h-1zM856,438h1v1h-1zM874,438h1v1h-1zM910,438h1v1h-1zM928,438h1v1h-1zM946,438h1v1h-1zM964,438h1v1h-1zM79,469h1v1h-1zM97,469h1v1h-1zM115,469h1v1h-1zM133,469h1v1h-1zM151,469h1v1h-1zM187,469h1v1h-1zM205,469h1v1h-1zM224,469h1v1h-1zM242,469h1v1h-1zM278,469h1v1h-1zM296,469h1v1h-1zM314,469h1v1h-1zM332,469h1v1h-1zM368,469h1v1h-1zM386,469h1v1h-1zM404,469h1v1h-1zM422,469h1v1h-1zM458,469h1v1h-1zM476,469h1v1h-1zM495,469h1v1h-1zM513,469h1v1h-1zM549,469h1v1h-1zM567,469h1v1h-1zM585,469h1v1h-1zM603,469h1v1h-1zM639,469h1v1h-1zM657,469h1v1h-1zM675,469h1v1h-1zM693,469h1v1h-1zM729,469h1v1h-1zM747,469h1v1h-1zM765,469h1v1h-1zM783,469h1v1h-1zM819,469h1v1h-1zM837,469h1v1h-1zM856,469h1v1h-1zM874,469h1v1h-1zM910,469h1v1h-1zM928,469h1v1h-1zM946,469h1v1h-1zM964,469h1v1h-1zM79,499h1v1h-1zM97,499h1v1h-1zM115,499h1v1h-1zM133,499h1v1h-1zM151,499h1v1h-1zM187,499h1v1h-1zM205,499h1v1h-1zM224,499h1v1h-1zM242,499h1v1h-1zM278,499h1v1h-1zM296,499h1v1h-1zM314,499h1v1h-1zM332,499h1v1h-1zM368,499h1v1h-1zM386,499h1v1h-1zM404,499h1v1h-1zM422,499h1v1h-1zM458,499h1v1h-1zM476,499h1v1h-1zM495,499h1v1h-1zM513,499h1v1h-1zM549,499h1v1h-1zM567,499h1v1h-1zM585,499h1v1h-1zM603,499h1v1h-1zM639,499h1v1h-1zM657,499h1v1h-1zM675,499h1v1h-1zM693,499h1v1h-1zM729,499h1v1h-1zM747,499h1v1h-1zM765,499h1v1h-1zM783,499h1v1h-1zM819,499h1v1h-1zM837,499h1v1h-1zM856,499h1v1h-1zM874,499h1v1h-1zM910,499h1v1h-1zM928,499h1v1h-1zM946,499h1v1h-1zM964,499h1v1h-1z" fill="#d0d0d0" shape-rendering="crispEdges"/></svg><svg style="left:0px;top:0px;" width="1026" height="591" viewBox="0 0 1026 591"><path d="M79,408h1V413h-1zM80,409h1V414h-1zM81,406h1V414h-1zM82,406h1V413h-1zM83,407h1V410h-1zM84,406h1V409h-1zM85,404h1V410h-1zM86,402h1V408h-1zM87,401h1V408h-1zM88,401h1V407h-1zM89,402h1V406h-1zM90,399h1V404h-1zM91,399h1V404h-1zM92,398h1V403h-1zM93,398h1V403h-1zM94,397h1V401h-1zM95,395h1V401h-1zM96,397h1V401h-1zM97,395h1V401h-1zM98,394h1V399h-1zM99,394h1V398h-1zM100,392h1V398h-1zM101,392h1V396h-1zM102,391h1V397h-1zM103,392h1V396h-1zM104,390h1V394h-1zM105,390h1V396h-1zM106,389h1V393h-1zM107,388h1V392h-1zM108,389h1V395h-1zM109,386h1V392h-1zM110,386h1V389h-1zM111,385h1V389h-1zM112,384h1V388h-1zM113,384h1V390h-1zM114,383h1V389h-1zM115,383h1V389h-1zM116,383h1V387h-1zM117,381h1V386h-1zM118,381h1V386h-1zM119,382h1V386h-1zM120,380h1V383h-1zM121,380h1V386h-1zM122,379h1V385h-1zM123,379h1V383h-1zM124,376h1V381h-1zM125,376h1V382h-1zM126,378h1V381h-1zM127,377h1V382h-1zM128,376h1V380h-1zM129,376h1V379h-1zM130,374h1V379h-1zM131,373h1V378h-1zM132,374h1V380h-1zM133,375h1V380h-1zM134,374h1V378h-1zM135,371h1V379h-1zM136,372h1V377h-1zM137,372h1V377h-1zM138,372h1V375h-1zM139,371h1V375h-1zM140,371h1V378h-1zM141,372h1V375h-1zM142,370h1V374h-1zM143,369h1V375h-1zM144,370h1V375h-1zM145,368h1V374h-1zM146,369h1V374h-1zM147,369h1V374h-1zM148,369h1V372h-1zM149,369h1V373h-1zM150,368h1V372h-1zM151,367h1V372h-1zM152,368h1V373h-1zM153,367h1V373h-1zM154,368h1V372h-1zM155,368h1V372h-1zM156,367h1V372h-1zM157,366h1V371h-1zM158,367h1V372h-1zM159,368h1V372h-1zM160,367h1V372h-1zM161,367h1V371h-1zM162,366h1V371h-1zM163,367h1V372h-1zM164,368h1V372h-1zM165,368h1V371h-1zM166,366h1V374h-1zM167,367h1V372h-1zM168,367h1V372h-1zM169,368h1V372h-1zM170,368h1V373h-1zM171,369h1V372h-1zM172,368h1V372h-1zM173,370h1V373h-1zM174,369h1V372h-1zM175,370h1V373h-1zM176,369h1V373h-1zM177,368h1V374h-1zM178,370h1V373h-1zM179,369h1V373h-1zM180,370h1V375h-1zM181,370h1V374h-1zM182,371h1V375h-1zM183,370h1V375h-1zM184,370h1V377h-1zM185,371h1V375h-1zM186,371h1V375h-1zM187,373h1V376h-1zM188,373h1V378h-1zM189,371h1V378h-1zM190,373h1V377h-1zM191,373h1V377h-1zM192,374h1V378h-1zM193,375h1V380h-1zM194,376h1V380h-1zM195,375h1V379h-1zM196,376h1V379h-1zM197,374h1V382h-1zM198,377h1V381h-1zM199,377h1V382h-1zM200,378h1V382h-1zM201,378h1V383h-1zM202,379h1V384h-1zM203,378h1V383h-1zM204,381h1V385h-1zM205,379h1V385h-1zM206,380h1V387h-1zM207,381h1V386h-1zM208,379h1V387h-1zM209,383h1V389h-1zM210,385h1V388h-1zM211,385h1V388h-1zM212,385h1V389h-1zM213,385h1V390h-1zM214,387h1V390h-1zM215,388h1V391h-1zM216,386h1V392h-1zM217,389h1V393h-1zM218,389h1V394h-1zM219,388h1V393h-1zM220,390h1V396h-1zM221,391h1V396h-1zM222,391h1V396h-1zM223,393h1V398h-1zM224,393h1V398h-1zM225,395h1V398h-1zM226,394h1V400h-1zM227,397h1V400h-1zM228,395h1V402h-1zM229,398h1V403h-1zM230,398h1V402h-1zM231,398h1V402h-1zM232,400h1V405h-1zM233,398h1V405h-1zM234,399h1V405h-1zM235,399h1V406h-1zM236,402h1V406h-1zM237,401h1V409h-1zM238,402h1V409h-1zM239,404h1V410h-1zM240,405h1V409h-1zM241,405h1V409h-1zM242,404h1V411h-1zM243,407h1V410h-1zM244,407h1V412h-1zM245,408h1V412h-1zM246,408h1V413h-1zM247,410h1V414h-1zM248,410h1V414h-1zM249,411h1V415h-1zM250,412h1V417h-1zM251,413h1V418h-1zM252,412h1V417h-1zM253,414h1V419h-1zM254,415h1V420h-1zM255,415h1V419h-1zM256,416h1V419h-1zM257,415h1V420h-1zM258,415h1V421h-1zM259,418h1V422h-1zM260,418h1V424h-1zM261,419h1V424h-1zM262,418h1V424h-1zM263,418h1V424h-1zM264,420h1V426h-1zM265,420h1V426h-1zM266,419h1V427h-1zM267,422h1V427h-1zM268,422h1V427h-1zM269,422h1V427h-1zM270,425h1V428h-1zM271,424h1V429h-1zM272,424h1V431h-1zM273,426h1V429h-1zM274,426h1V429h-1zM275,426h1V431h-1zM276,426h1V432h-1zM277,426h1V431h-1zM278,428h1V432h-1zM279,428h1V433h-1zM280,429h1V433h-1zM281,429h1V433h-1zM282,429h1V433h-1zM283,430h1V434h-1zM284,429h1V435h-1zM285,430h1V434h-1zM286,431h1V435h-1zM287,431h1V435h-1zM288,430h1V435h-1zM289,430h1V437h-1zM290,430h1V437h-1zM291,430h1V436h-1zM292,432h1V435h-1zM293,431h1V436h-1zM294,432h1V436h-1zM295,433h1V437h-1zM296,431h1V437h-1zM297,432h1V438h-1zM298,433h1V439h-1zM299,434h1V439h-1zM300,434h1V438h-1zM301,434h1V438h-1zM302,433h1V438h-1zM303,433h1V438h-1zM304,433h1V439h-1zM305,433h1V438h-1zM306,434h1V439h-1zM307,434h1V438h-1zM308,433h1V439h-1zM309,433h1V438h-1zM310,433h1V437h-1zM311,434h1V438h-1zM312,434h1V440h-1zM313,433h1V438h-1zM314,433h1V438h-1zM315,434h1V438h-1zM316,434h1V438h-1zM317,432h1V437h-1zM318,433h1V436h-1zM319,433h1V437h-1zM320,433h1V436h-1zM321,432h1V436h-1zM322,432h1V436h-1zM323,431h1V437h-1zM324,430h1V437h-1zM325,431h1V435h-1zM326,430h1V436h-1zM327,432h1V435h-1zM328,430h1V434h-1zM329,428h1V435h-1zM330,428h1V432h-1zM331,428h1V434h-1zM332,428h1V434h-1zM333,426h1V433h-1zM334,428h1V432h-1zM335,427h1V431h-1zM336,427h1V433h-1zM337,427h1V432h-1zM338,425h1V432h-1zM339,425h1V431h-1zM340,424h1V431h-1zM341,424h1V430h-1zM342,422h1V428h-1zM343,423h1V429h-1zM344,423h1V429h-1zM345,423h1V426h-1zM346,420h1V427h-1zM347,420h1V426h-1zM348,421h1V426h-1zM349,419h1V426h-1zM350,419h1V424h-1zM351,419h1V424h-1zM352,419h1V422h-1zM353,418h1V422h-1zM354,418h1V422h-1zM355,416h1V422h-1zM356,416h1V422h-1zM357,415h1V421h-1zM358,414h1V419h-1zM359,414h1V419h-1zM360,413h1V417h-1zM361,411h1V417h-1zM362,412h1V417h-1zM363,412h1V415h-1zM364,408h1V417h-1zM365,409h1V415h-1zM366,409h1V412h-1zM367,409h1V415h-1zM368,408h1V414h-1zM369,406h1V412h-1zM370,407h1V411h-1zM371,406h1V410h-1zM372,405h1V410h-1zM373,403h1V408h-1zM374,403h1V408h-1zM375,403h1V407h-1zM376,402h1V406h-1zM377,400h1V406h-1zM378,400h1V404h-1zM379,399h1V406h-1zM380,398h1V402h-1zM381,398h1V402h-1zM382,397h1V402h-1zM383,396h1V402h-1zM384,395h1V401h-1zM385,395h1V399h-1zM386,395h1V400h-1zM387,394h1V398h-1zM388,394h1V398h-1zM389,393h1V397h-1zM390,392h1V396h-1zM391,392h1V395h-1zM392,391h1V396h-1zM393,390h1V394h-1zM394,390h1V395h-1zM395,389h1V393h-1zM396,388h1V391h-1zM397,386h1V391h-1zM398,387h1V391h-1zM399,385h1V390h-1zM400,386h1V390h-1zM401,384h1V389h-1zM402,383h1V390h-1zM403,382h1V389h-1zM404,383h1V388h-1zM405,383h1V387h-1zM406,382h1V385h-1zM407,380h1V386h-1zM408,381h1V385h-1zM409,379h1V383h-1zM410,379h1V384h-1zM411,379h1V384h-1zM412,379h1V382h-1zM413,378h1V381h-1zM414,375h1V381h-1zM415,376h1V381h-1zM416,377h1V381h-1zM417,375h1V379h-1zM418,375h1V379h-1zM419,374h1V379h-1zM420,372h1V378h-1zM421,373h1V379h-1zM422,373h1V378h-1zM423,374h1V378h-1zM424,372h1V376h-1zM425,372h1V376h-1zM426,371h1V376h-1zM427,371h1V377h-1zM428,372h1V375h-1zM429,370h1V374h-1zM430,370h1V375h-1zM431,369h1V375h-1zM432,372h1V375h-1zM433,371h1V376h-1zM434,369h1V375h-1zM435,369h1V374h-1zM436,368h1V374h-1zM437,369h1V374h-1zM438,368h1V374h-1zM439,368h1V372h-1zM440,368h1V373h-1zM441,367h1V372h-1zM442,367h1V373h-1zM443,368h1V371h-1zM444,368h1V372h-1zM445,366h1V371h-1zM446,367h1V371h-1zM447,367h1V371h-1zM448,367h1V370h-1zM449,368h1V373h-1zM450,366h1V371h-1zM451,368h1V372h-1zM452,367h1V372h-1zM453,366h1V372h-1zM454,367h1V372h-1zM455,366h1V370h-1zM456,367h1V372h-1zM457,367h1V371h-1zM458,366h1V373h-1zM459,366h1V372h-1zM460,368h1V371h-1zM461,368h1V373h-1zM462,368h1V372h-1zM463,367h1V374h-1zM464,368h1V373h-1zM465,369h1V373h-1zM466,369h1V373h-1zM467,369h1V373h-1zM468,369h1V374h-1zM469,370h1V374h-1zM470,370h1V376h-1zM471,371h1V375h-1zM472,371h1V376h-1zM473,370h1V375h-1zM474,371h1V375h-1zM475,372h1V375h-1zM476,371h1V378h-1zM477,372h1V378h-1zM478,373h1V377h-1zM479,373h1V378h-1zM480,374h1V380h-1zM481,375h1V378h-1zM482,375h1V380h-1zM483,376h1V379h-1zM484,375h1V379h-1zM485,375h1V381h-1zM486,377h1V382h-1zM487,377h1V382h-1zM488,377h1V381h-1zM489,378h1V381h-1zM490,379h1V384h-1zM491,379h1V384h-1zM492,379h1V385h-1zM493,380h1V385h-1zM494,380h1V385h-1zM495,383h1V386h-1zM496,382h1V387h-1zM497,384h1V388h-1zM498,385h1V388h-1zM499,383h1V388h-1zM500,383h1V391h-1zM501,384h1V391h-1zM502,387h1V391h-1zM503,388h1V392h-1zM504,387h1V392h-1zM505,389h1V392h-1zM506,389h1V393h-1zM507,389h1V395h-1zM508,390h1V393h-1zM509,391h1V395h-1zM510,391h1V396h-1zM511,393h1V398h-1zM512,393h1V397h-1zM513,393h1V400h-1zM514,394h1V399h-1zM515,395h1V399h-1zM516,395h1V399h-1zM517,397h1V402h-1zM518,397h1V402h-1zM519,399h1V402h-1zM520,400h1V403h-1zM521,400h1V406h-1zM522,398h1V404h-1zM523,400h1V405h-1zM524,403h1V406h-1zM525,402h1V407h-1zM526,404h1V408h-1zM527,405h1V409h-1zM528,405h1V409h-1zM529,405h1V410h-1zM530,406h1V410h-1zM531,407h1V412h-1zM532,408h1V413h-1zM533,407h1V411h-1zM534,409h1V413h-1zM535,409h1V413h-1zM536,409h1V414h-1zM537,411h1V415h-1zM538,411h1V416h-1zM539,411h1V417h-1zM540,411h1V417h-1zM541,414h1V418h-1zM542,414h1V420h-1zM543,415h1V419h-1zM544,416h1V419h-1zM545,417h1V423h-1zM546,416h1V422h-1zM547,418h1V422h-1zM548,418h1V424h-1zM549,418h1V422h-1zM550,418h1V423h-1zM551,417h1V428h-1zM552,421h1V428h-1zM553,421h1V425h-1zM554,420h1V428h-1zM555,422h1V427h-1zM556,422h1V428h-1zM557,422h1V428h-1zM558,424h1V428h-1zM559,424h1V428h-1zM560,424h1V429h-1zM561,424h1V430h-1zM562,426h1V430h-1zM563,425h1V431h-1zM564,426h1V431h-1zM565,427h1V432h-1zM566,427h1V430h-1zM567,425h1V433h-1zM568,429h1V433h-1zM569,429h1V435h-1zM570,428h1V433h-1zM571,429h1V436h-1zM572,430h1V434h-1zM573,430h1V434h-1zM574,430h1V433h-1zM575,431h1V435h-1zM576,431h1V436h-1zM577,431h1V436h-1zM578,432h1V437h-1zM579,432h1V437h-1zM580,432h1V436h-1zM581,432h1V436h-1zM582,433h1V438h-1zM583,433h1V440h-1zM584,434h1V438h-1zM585,432h1V438h-1zM586,433h1V438h-1zM587,433h1V437h-1zM588,433h1V438h-1zM589,434h1V438h-1zM590,433h1V439h-1zM591,433h1V437h-1zM592,434h1V438h-1zM593,433h1V438h-1zM594,434h1V438h-1zM595,434h1V440h-1zM596,433h1V439h-1zM597,434h1V438h-1zM598,433h1V437h-1zM599,434h1V439h-1zM600,434h1V437h-1zM601,435h1V438h-1zM602,433h1V440h-1zM603,434h1V440h-1zM604,433h1V438h-1zM605,433h1V438h-1zM606,432h1V437h-1zM607,431h1V436h-1zM608,433h1V438h-1zM609,433h1V437h-1zM610,431h1V435h-1zM611,433h1V436h-1zM612,432h1V436h-1zM613,431h1V436h-1zM614,432h1V435h-1zM615,431h1V434h-1zM616,430h1V436h-1zM617,430h1V434h-1zM618,428h1V434h-1zM619,430h1V434h-1zM620,428h1V434h-1zM621,429h1V434h-1zM622,428h1V433h-1zM623,428h1V433h-1zM624,427h1V432h-1zM625,427h1V431h-1zM626,425h1V430h-1zM627,425h1V430h-1zM628,426h1V431h-1zM629,425h1V431h-1zM630,424h1V429h-1zM631,424h1V429h-1zM632,423h1V428h-1zM633,421h1V427h-1zM634,422h1V425h-1zM635,422h1V428h-1zM636,421h1V426h-1zM637,420h1V425h-1zM638,420h1V424h-1zM639,419h1V424h-1zM640,417h1V424h-1zM641,418h1V422h-1zM642,417h1V422h-1zM643,418h1V422h-1zM644,417h1V422h-1zM645,416h1V420h-1zM646,415h1V420h-1zM647,413h1V418h-1zM648,414h1V420h-1zM649,412h1V418h-1zM650,412h1V417h-1zM651,412h1V416h-1zM652,411h1V415h-1zM653,411h1V415h-1zM654,409h1V414h-1zM655,408h1V412h-1zM656,408h1V414h-1zM657,407h1V412h-1zM658,406h1V411h-1zM659,405h1V412h-1zM660,405h1V410h-1zM661,405h1V409h-1zM662,404h1V408h-1zM663,403h1V407h-1zM664,399h1V408h-1zM665,399h1V406h-1zM666,400h1V406h-1zM667,401h1V404h-1zM668,400h1V404h-1zM669,399h1V404h-1zM670,397h1V403h-1zM671,397h1V402h-1zM672,396h1V402h-1zM673,395h1V400h-1zM674,395h1V401h-1zM675,396h1V400h-1zM676,394h1V397h-1zM677,392h1V397h-1zM678,391h1V396h-1zM679,390h1V396h-1zM680,390h1V396h-1zM681,391h1V397h-1zM682,389h1V396h-1zM683,387h1V393h-1zM684,389h1V393h-1zM685,388h1V394h-1zM686,387h1V392h-1zM687,387h1V392h-1zM688,386h1V390h-1zM689,386h1V391h-1zM690,383h1V390h-1zM691,383h1V387h-1zM692,383h1V388h-1zM693,382h1V387h-1zM694,381h1V387h-1zM695,381h1V386h-1zM696,382h1V385h-1zM697,380h1V384h-1zM698,379h1V384h-1zM699,380h1V383h-1zM700,378h1V384h-1zM701,379h1V383h-1zM702,375h1V380h-1zM703,376h1V380h-1zM704,377h1V380h-1zM705,374h1V380h-1zM706,376h1V380h-1zM707,376h1V380h-1zM708,375h1V379h-1zM709,374h1V377h-1zM710,373h1V378h-1zM711,374h1V378h-1zM712,373h1V379h-1zM713,372h1V376h-1zM714,372h1V376h-1zM715,370h1V377h-1zM716,371h1V377h-1zM717,371h1V375h-1zM718,371h1V375h-1zM719,370h1V376h-1zM720,369h1V375h-1zM721,370h1V374h-1zM722,369h1V373h-1zM723,368h1V373h-1zM724,368h1V374h-1zM725,368h1V374h-1zM726,369h1V373h-1zM727,368h1V373h-1zM728,368h1V374h-1zM729,368h1V372h-1zM730,367h1V373h-1zM731,368h1V371h-1zM732,367h1V372h-1zM733,367h1V370h-1zM734,366h1V378h-1zM735,366h1V373h-1zM736,367h1V372h-1zM737,368h1V372h-1zM738,368h1V371h-1zM739,368h1V371h-1zM740,368h1V372h-1zM741,367h1V371h-1zM742,367h1V372h-1zM743,366h1V371h-1zM744,367h1V371h-1zM745,363h1V371h-1zM746,367h1V372h-1zM747,368h1V372h-1zM748,366h1V373h-1zM749,366h1V372h-1zM750,367h1V372h-1zM751,368h1V374h-1zM752,369h1V373h-1zM753,370h1V375h-1zM754,368h1V373h-1zM755,369h1V374h-1zM756,370h1V375h-1zM757,370h1V373h-1zM758,371h1V375h-1zM759,369h1V375h-1zM760,371h1V376h-1zM761,370h1V375h-1zM762,370h1V377h-1zM763,372h1V375h-1zM764,372h1V378h-1zM765,372h1V377h-1zM766,372h1V377h-1zM767,374h1V377h-1zM768,374h1V378h-1zM769,374h1V378h-1zM770,374h1V380h-1zM771,376h1V379h-1zM772,375h1V381h-1zM773,374h1V381h-1zM774,376h1V380h-1zM775,378h1V383h-1zM776,377h1V381h-1zM777,378h1V382h-1zM778,378h1V383h-1zM779,379h1V383h-1zM780,380h1V385h-1zM781,381h1V384h-1zM782,381h1V387h-1zM783,379h1V385h-1zM784,379h1V387h-1zM785,381h1V387h-1zM786,383h1V387h-1zM787,383h1V389h-1zM788,386h1V389h-1zM789,386h1V390h-1zM790,385h1V391h-1zM791,385h1V390h-1zM792,386h1V391h-1zM793,387h1V392h-1zM794,389h1V392h-1zM795,389h1V394h-1zM796,389h1V395h-1zM797,390h1V395h-1zM798,391h1V396h-1zM799,392h1V397h-1zM800,392h1V397h-1zM801,392h1V397h-1zM802,392h1V397h-1zM803,394h1V399h-1zM804,396h1V399h-1zM805,397h1V400h-1zM806,397h1V401h-1zM807,397h1V401h-1zM808,397h1V402h-1zM809,400h1V403h-1zM810,400h1V404h-1zM811,400h1V405h-1zM812,400h1V406h-1zM813,402h1V406h-1zM814,403h1V408h-1zM815,404h1V407h-1zM816,405h1V408h-1zM817,404h1V410h-1zM818,405h1V410h-1zM819,405h1V411h-1zM820,406h1V412h-1zM821,406h1V410h-1zM822,408h1V412h-1zM823,409h1V413h-1zM824,408h1V416h-1zM825,410h1V415h-1zM826,411h1V415h-1zM827,412h1V416h-1zM828,412h1V417h-1zM829,413h1V418h-1zM830,414h1V417h-1zM831,414h1V419h-1zM832,415h1V419h-1zM833,416h1V421h-1zM834,416h1V421h-1zM835,417h1V422h-1zM836,417h1V422h-1zM837,419h1V423h-1zM838,418h1V424h-1zM839,417h1V424h-1zM840,417h1V424h-1zM841,421h1V425h-1zM842,421h1V427h-1zM843,421h1V427h-1zM844,421h1V427h-1zM845,422h1V428h-1zM846,422h1V429h-1zM847,423h1V429h-1zM848,424h1V428h-1zM849,425h1V430h-1zM850,425h1V429h-1zM851,426h1V430h-1zM852,427h1V431h-1zM853,426h1V432h-1zM854,427h1V432h-1zM855,428h1V431h-1zM856,428h1V433h-1zM857,429h1V433h-1zM858,429h1V436h-1zM859,428h1V433h-1zM860,430h1V435h-1zM861,431h1V435h-1zM862,430h1V435h-1zM863,430h1V436h-1zM864,429h1V435h-1zM865,431h1V437h-1zM866,432h1V435h-1zM867,433h1V436h-1zM868,432h1V437h-1zM869,432h1V436h-1zM870,431h1V437h-1zM871,432h1V438h-1zM872,432h1V438h-1zM873,433h1V438h-1zM874,433h1V438h-1zM875,434h1V438h-1zM876,434h1V439h-1zM877,432h1V438h-1zM878,433h1V438h-1zM879,433h1V440h-1zM880,432h1V438h-1zM881,434h1V438h-1zM882,433h1V438h-1zM883,434h1V439h-1zM884,432h1V438h-1zM885,432h1V437h-1zM886,434h1V437h-1zM887,433h1V438h-1zM888,434h1V438h-1zM889,433h1V437h-1zM890,433h1V439h-1zM891,434h1V438h-1zM892,434h1V438h-1zM893,434h1V438h-1zM894,433h1V437h-1zM895,433h1V436h-1zM896,433h1V437h-1zM897,432h1V437h-1zM898,432h1V436h-1zM899,431h1V436h-1zM900,432h1V436h-1zM901,431h1V436h-1zM902,430h1V435h-1zM903,431h1V436h-1zM904,430h1V437h-1zM905,429h1V436h-1zM906,429h1V436h-1zM907,429h1V436h-1zM908,429h1V433h-1zM909,427h1V433h-1zM910,428h1V433h-1zM911,429h1V432h-1zM912,428h1V434h-1zM913,427h1V432h-1zM914,426h1V432h-1zM915,427h1V430h-1zM916,426h1V429h-1zM917,425h1V429h-1zM918,424h1V428h-1zM919,424h1V430h-1zM920,423h1V429h-1zM921,423h1V427h-1zM922,422h1V427h-1zM923,422h1V427h-1zM924,420h1V427h-1zM925,420h1V424h-1zM926,418h1V427h-1zM927,421h1V424h-1zM928,420h1V423h-1zM929,416h1V423h-1zM930,417h1V422h-1zM931,417h1V422h-1zM932,416h1V421h-1zM933,416h1V420h-1zM934,416h1V420h-1zM935,414h1V419h-1zM936,415h1V419h-1zM937,413h1V418h-1zM938,411h1V417h-1zM939,411h1V417h-1zM940,412h1V416h-1zM941,410h1V416h-1zM942,410h1V415h-1zM943,409h1V414h-1zM944,408h1V413h-1zM945,408h1V413h-1zM946,406h1V411h-1zM947,405h1V410h-1zM948,405h1V411h-1zM949,404h1V409h-1zM950,402h1V409h-1zM951,402h1V407h-1zM952,402h1V406h-1zM953,402h1V407h-1zM954,402h1V406h-1zM955,400h1V405h-1zM956,398h1V405h-1zM957,399h1V405h-1zM958,396h1V403h-1zM959,399h1V402h-1zM960,398h1V402h-1zM961,397h1V401h-1zM962,394h1V401h-1zM963,395h1V400h-1zM964,394h1V398h-1zM965,394h1V398h-1zM966,391h1V397h-1zM967,391h1V398h-1zM968,390h1V396h-1zM969,390h1V396h-1zM970,389h1V396h-1zM971,387h1V396h-1zM972,388h1V393h-1zM973,388h1V392h-1zM974,387h1V392h-1zM975,385h1V391h-1zM976,385h1V390h-1zM977,385h1V390h-1zM978,385h1V389h-1zM979,385h1V389h-1zM980,384h1V389h-1zM981,384h1V387h-1zM982,380h1V390h-1z" fill="#00ff00" shape-rendering="crispEdges"/></svg><svg style="left:67px;top:406px;" width="10" height="25" viewBox="0 0 10 25"><path d="M9,3 H5.5 V22 H2" stroke="#e8f0e8" stroke-width="2.2" fill="none"/></svg><div style="left:20px;top:278px;width:47px;height:18px;background:#00ff00;border-radius:3px;box-shadow:inset 0 0 0 1px #00c000;"></div><span style="left:26.20px;top:281.74px;font-size:12px;line-height:12px;color:#001000;transform:scaleX(0.8900);">0.00800</span><span style="left:26.20px;top:311.64px;font-size:12px;line-height:12px;color:#00ff00;transform:scaleX(0.8900);-webkit-text-stroke:0.25px #00ff00;">0.00600</span><span style="left:26.20px;top:341.64px;font-size:12px;line-height:12px;color:#00ff00;transform:scaleX(0.8900);-webkit-text-stroke:0.25px #00ff00;">0.00400</span><span style="left:26.20px;top:372.64px;font-size:12px;line-height:12px;color:#00ff00;transform:scaleX(0.8900);-webkit-text-stroke:0.25px #00ff00;">0.00200</span><span style="left:26.20px;top:402.64px;font-size:12px;line-height:12px;color:#00ff00;transform:scaleX(0.8900);-webkit-text-stroke:0.25px #00ff00;">0.00000</span><span style="left:21.80px;top:432.64px;font-size:12px;line-height:12px;color:#00ff00;transform:scaleX(0.9078);-webkit-text-stroke:0.25px #00ff00;">-0.00200</span><span style="left:21.80px;top:463.64px;font-size:12px;line-height:12px;color:#00ff00;transform:scaleX(0.9078);-webkit-text-stroke:0.25px #00ff00;">-0.00400</span><span style="left:21.80px;top:493.64px;font-size:12px;line-height:12px;color:#00ff00;transform:scaleX(0.9078);-webkit-text-stroke:0.25px #00ff00;">-0.00600</span><div style="left:20px;top:521px;width:47px;height:18px;background:#00ff00;border-radius:3px;box-shadow:inset 0 0 0 1px #00c000;"></div><span style="left:21.80px;top:524.74px;font-size:12px;line-height:12px;color:#001000;transform:scaleX(0.9078);">-0.00800</span><span style="left:72.50px;top:551.84px;font-size:12px;line-height:12px;color:#fff;transform:scaleX(0.8746);-webkit-text-stroke:0.2px #fff;">0 s</span><span style="left:148.75px;top:551.84px;font-size:12px;line-height:12px;color:#fff;transform:scaleX(0.8968);-webkit-text-stroke:0.2px #fff;">100.0 µs</span><span style="left:239.75px;top:551.84px;font-size:12px;line-height:12px;color:#fff;transform:scaleX(0.8968);-webkit-text-stroke:0.2px #fff;">200.0 µs</span><span style="left:329.75px;top:551.84px;font-size:12px;line-height:12px;color:#fff;transform:scaleX(0.8968);-webkit-text-stroke:0.2px #fff;">300.0 µs</span><span style="left:419.75px;top:551.84px;font-size:12px;line-height:12px;color:#fff;transform:scaleX(0.8968);-webkit-text-stroke:0.2px #fff;">400.0 µs</span><span style="left:510.75px;top:551.84px;font-size:12px;line-height:12px;color:#fff;transform:scaleX(0.8968);-webkit-text-stroke:0.2px #fff;">500.0 µs</span><span style="left:600.75px;top:551.84px;font-size:12px;line-height:12px;color:#fff;transform:scaleX(0.8968);-webkit-text-stroke:0.2px #fff;">600.0 µs</span><span style="left:690.75px;top:551.84px;font-size:12px;line-height:12px;color:#fff;transform:scaleX(0.8968);-webkit-text-stroke:0.2px #fff;">700.0 µs</span><span style="left:780.75px;top:551.84px;font-size:12px;line-height:12px;color:#fff;transform:scaleX(0.8968);-webkit-text-stroke:0.2px #fff;">800.0 µs</span><span style="left:871.75px;top:551.84px;font-size:12px;line-height:12px;color:#fff;transform:scaleX(0.8968);-webkit-text-stroke:0.2px #fff;">900.0 µs</span><span style="left:959.00px;top:551.84px;font-size:12px;line-height:12px;color:#fff;transform:scaleX(0.9102);-webkit-text-stroke:0.2px #fff;">1.0000 ms</span><div style="left:1px;top:571px;width:1024px;height:1px;background:#dadada;"></div><div style="left:1021px;top:580px;width:2px;height:2px;background:#c0c0c0;"></div><div style="left:1018px;top:583px;width:2px;height:2px;background:#c0c0c0;"></div><div style="left:1021px;top:583px;width:2px;height:2px;background:#c0c0c0;"></div><div style="left:1015px;top:586px;width:2px;height:2px;background:#c0c0c0;"></div><div style="left:1018px;top:586px;width:2px;height:2px;background:#c0c0c0;"></div><div style="left:1021px;top:586px;width:2px;height:2px;background:#c0c0c0;"></div><div style="left:1px;top:589px;width:1024px;height:1px;background:#ffffff;"></div><div style="left:0px;top:0px;width:1px;height:591px;background:#666666;"></div><div style="left:1025px;top:0px;width:1px;height:591px;background:#666666;"></div><div style="left:0px;top:0px;width:1026px;height:1px;background:#707070;"></div><div style="left:0px;top:590px;width:1026px;height:1px;background:#666666;"></div><span style="left:876.00px;top:40.92px;font-size:34px;line-height:34px;color:#e3241b;transform:scaleX(0.9831);">TiePie</span><svg style="left:972px;top:37px;" width="48" height="48" viewBox="0 0 48 48"><polygon points="14,0.75 34,0.75 47.25,14 47.25,34 34,47.25 14,47.25 0.75,34 0.75,14" fill="#fff" stroke="#767676" stroke-width="2"/><path d="M2.5,23.5 L15,14 L34,14 L46,23.5 L34,33.5 L15,33.5 Z" fill="none" stroke="#8a8a8a" stroke-width="0.6"/><circle cx="24" cy="24" r="9.2" fill="#a4a4a4"/><path d="M17,20 H31 M16,24 H32 M17,28 H31 M20,16 V32 M22,15.5 V32.5 M24,15 V33 M26,15.5 V32.5 M28,16 V32" stroke="#c8c8c8" stroke-width="0.5"/><text x="24" y="13" font-size="8.5" fill="#e3241b" text-anchor="middle" font-family="Liberation Sans" textLength="22" lengthAdjust="spacingAndGlyphs">TiePie</text><text x="24" y="40.5" font-size="5.5" fill="#e3241b" text-anchor="middle" font-family="Liberation Sans" textLength="26" lengthAdjust="spacingAndGlyphs">engineering</text></svg><svg style="left:13px;top:61px;" width="26" height="25" viewBox="0 0 26 25"><path d="M10,6.5 C12,2 18,0.5 23,5" stroke="#000" stroke-width="2" fill="none"/><polygon points="25,2.5 25,8 19.5,7" fill="#000"/><path d="M1.5,23 V10 H8 L10,12 H20 V14" fill="#e8c070" stroke="#905010" stroke-width="1"/><polygon points="1.5,23 5,14.5 23.5,14.5 20,23" fill="#f8d888" stroke="#905010" stroke-width="1"/></svg><svg style="left:45px;top:65px;" width="24" height="20" viewBox="0 0 24 20"><rect x="0.5" y="0.5" width="23" height="19" fill="#e4e4e4" stroke="#808080"/><path d="M1,17 H4.6 V9.2 H8.6 V17 H14.5 V9.2 H20.7 V17 H23" stroke="#1a80ff" stroke-width="1.4" fill="none"/><path d="M1,11.5 C2.5,8 3.5,7 4.5,7 C6,7 9,15 11.5,15 C13.5,15 15,10 17,10 C19,10 21,13 23,15" stroke="#20b020" stroke-width="1.1" fill="none"/><polygon points="14.5,0.5 18.8,0.5 18.8,6.4 23.3,6.4 16.6,15 9.8,6.4 14.5,6.4" fill="#00e000" stroke="#fff" stroke-width="1.3"/></svg><svg style="left:76px;top:62px;" width="25" height="24" viewBox="0 0 25 24"><path d="M0.8,0.8 H19 L24,5.5 V23.2 H0.8 Z" fill="#7ab4f0" stroke="#0a1a90" stroke-width="1.4"/><rect x="6" y="1.5" width="12" height="6.5" fill="#000"/><rect x="13.5" y="2.5" width="3" height="4.5" fill="#fff"/><rect x="5" y="11.5" width="15" height="11" fill="#fff" stroke="#0a1a90" stroke-width="1.2"/></svg><svg style="left:107px;top:62px;" width="25" height="24" viewBox="0 0 25 24"><path d="M5,6.5 C9,1.5 15,1.5 19,6" stroke="#10a020" stroke-width="4" fill="none"/><polygon points="24,1 24,9.5 15.5,9.5" fill="#10a020"/><path d="M20,17.5 C16,22.5 10,22.5 6,18" stroke="#10a020" stroke-width="4" fill="none"/><polygon points="1,23 1,14 9.5,14" fill="#10a020"/></svg><svg style="left:138px;top:62px;" width="24" height="24" viewBox="0 0 24 24"><path d="M3,3.5 L21,21.5 M21,3.5 L3,21.5" stroke="#d02020" stroke-width="5.5" stroke-linecap="square"/><path d="M3,3.5 L21,21.5 M21,3.5 L3,21.5" stroke="#f4a0a0" stroke-width="3.5" stroke-linecap="square"/></svg><svg style="left:170px;top:63px;" width="23" height="22" viewBox="0 0 23 22"><rect x="4.5" y="1.5" width="14" height="9" fill="#fff" stroke="#000"/><rect x="1" y="9" width="21" height="7" fill="#8080f0" stroke="#0000e0" stroke-width="1.4"/><rect x="4.5" y="13.5" width="14" height="8" fill="#fff" stroke="#000"/></svg><svg style="left:210px;top:62px;" width="24" height="24" viewBox="0 0 24 24"><rect x="0.5" y="0.5" width="23" height="23" fill="#fff" stroke="#808080"/><line x1="5" y1="2" x2="5" y2="5" stroke="#404040"/><rect x="3.5" y="5.5" width="4" height="4" fill="#fff" stroke="#000"/><line x1="7.5" y1="7.5" x2="11" y2="7.5" stroke="#404040"/><rect x="11" y="6" width="8" height="3" fill="#000"/><path d="M13.5,9 V20.5 H16 M13.5,14.5 H16" stroke="#404040" fill="none"/><rect x="16" y="13" width="4.5" height="3" fill="#000"/><rect x="16" y="19" width="4.5" height="3" fill="#000"/></svg><svg style="left:251px;top:62px;" width="25" height="24" viewBox="0 0 25 24"><path d="M1,0 V23 H24" stroke="#000" stroke-width="1.4" fill="none"/><path d="M13.5,1.5 H17 V7.5 H23 V11 H17 V17 H13.5 V11 H7.5 V7.5 H13.5 Z" fill="#8080ff" stroke="#0000ff" stroke-width="1"/></svg><svg style="left:282px;top:62px;" width="25" height="24" viewBox="0 0 25 24"><path d="M1,0 V23 H24" stroke="#000" stroke-width="1.4" fill="none"/><text x="13" y="8" font-size="10.5" font-family="Liberation Sans" fill="#000" stroke="#000" stroke-width="0.2" textLength="9.5" lengthAdjust="spacingAndGlyphs">Yt</text><path d="M1,8 C4,10 7,14 10,13.8 C14,13.5 19,11 24,8" stroke="#20b020" stroke-width="1.2" fill="none"/><path d="M1,16 L3.5,14 L9.5,20 L15.5,14 L22,20 L24,17.5" stroke="#3090d0" stroke-width="1.2" fill="none"/></svg><svg style="left:313px;top:62px;" width="25" height="24" viewBox="0 0 25 24"><path d="M1,0 V23 H24" stroke="#000" stroke-width="1.4" fill="none"/><text x="12.5" y="8" font-size="10.5" font-family="Liberation Sans" fill="#000" stroke="#000" stroke-width="0.2" textLength="11" lengthAdjust="spacingAndGlyphs">XY</text><path d="M10,6.3 C14,5.5 17,9 19.5,12.5 C22,16 20,20.5 16,21.3 C12,22 8,21 5.5,18 C3,15 4,10 6.5,8 C7.5,7 8.5,6.5 10,6.3" stroke="#20b020" stroke-width="1.2" fill="none"/></svg><svg style="left:344px;top:62px;" width="25" height="24" viewBox="0 0 25 24"><path d="M1,0 V23 H24" stroke="#000" stroke-width="1.4" fill="none"/><text x="6.8" y="7.2" font-size="9.8" font-family="Liberation Sans" fill="#000" stroke="#000" stroke-width="0.2" textLength="16.5" lengthAdjust="spacingAndGlyphs">FFT</text><path d="M1,20.5 L8,20 L10,19.5 L11.5,7 L13,19.8 L19.5,20 L21,15.5 L22.5,20.3 L24,20.3" stroke="#20b020" stroke-width="1.1" fill="none"/></svg><svg style="left:381px;top:62px;" width="25" height="24" viewBox="0 0 25 24"><path d="M0,5 C4,6 8,6 9.5,5 L10,1 L11,4 C15,6 19,6 24,6.5" stroke="#3090d0" stroke-width="1.2" fill="none"/><path d="M0,15 C6,12 10,13 14,12 C18,11 21,11 24,9" stroke="#20b020" stroke-width="1.2" fill="none"/><line x1="0" y1="23" x2="24" y2="23" stroke="#000" stroke-width="1.4"/></svg><svg style="left:418px;top:62px;" width="24" height="24" viewBox="0 0 24 24"><rect x="0" y="0" width="24" height="24" rx="3" fill="#a29c48"/><path d="M5,7 L4,17 M8,7 H12 L11.5,12 H8 L7,17 H11 M14,7 H18 L17.5,12 H14 M17.5,12 L17,17 H13" stroke="#000" stroke-width="1.3" fill="none"/></svg><svg style="left:452px;top:62px;" width="17" height="24" viewBox="0 0 17 24"><path d="M16.2,0.9 H12 A11,11 0 0 0 12,22.9 H16.2 V17 H13 A4.95,4.95 0 0 1 13,7.1 H16.2 Z" fill="#0a7a3a"/></svg><svg style="left:479px;top:63px;" width="26" height="24" viewBox="0 0 26 24"><rect x="1.5" y="5.5" width="3.6" height="17" rx="1.8" fill="#c4c4c4" stroke="#7a7a7a" stroke-width="1"/><text x="10" y="9.2" font-size="10.5" font-family="Liberation Sans" fill="#707070" text-anchor="middle" stroke="#707070" stroke-width="0.3">2</text><path d="M24.3,5.7 H17 Q15.7,5.7 15.7,7 V21 Q15.7,22.2 17,22.2 H24.3 V18.8 H18.5 V11 H24.3 Z" fill="#c4c4c4" stroke="#7a7a7a" stroke-width="1" stroke-linejoin="round"/></svg><svg style="left:510px;top:62px;" width="25" height="24" viewBox="0 0 25 24"><ellipse cx="3" cy="6.4" rx="1.6" ry="2.8" fill="none" stroke="#1a78d0" stroke-width="1.6"/><ellipse cx="9" cy="6.4" rx="1.6" ry="2.8" fill="none" stroke="#1a78d0" stroke-width="1.6"/><ellipse cx="21" cy="6.4" rx="1.6" ry="2.8" fill="none" stroke="#1a78d0" stroke-width="1.6"/><path d="M14,2.8 V10 M17,2.8 V10" stroke="#1a78d0" stroke-width="1.4"/><path d="M1.5,15 H23.5 Q24,15 23.8,16 L22.2,22.8 Q22,23.3 21.5,23.3 H3.5 Q3,23.3 2.8,22.8 L1.2,16 Q1,15 1.5,15 Z" fill="#c2e2c2" stroke="#8a8a8a" stroke-width="1.3"/><path d="M4.5,17.5 h1 M8.5,17.5 h1 M12.5,17.5 h1 M16.5,17.5 h1 M20.5,17.5 h1 M6.5,20.5 h1 M10.5,20.5 h1 M14.5,20.5 h1 M18.5,20.5 h1" stroke="#000" stroke-width="1.2"/></svg><svg style="left:552px;top:62px;" width="24" height="24" viewBox="0 0 24 24"><path d="M0.3,1 H22.9 V6.9 L19.1,3.8 H9 L15,10.2 L8.2,20.8 H18.6 L22.9,17.8 V23.6 H2.1 L11.2,11.7 Z" fill="#000"/></svg><div style="left:590px;top:63px;width:22px;height:22px;background:conic-gradient(#f0d850 0deg, #60c050 60deg, #3a8ad8 110deg, #5050b0 180deg, #b03090 225deg, #f05040 270deg, #f0a060 320deg, #f0d850 360deg);border-radius:50%;"></div><svg style="left:588px;top:60px;" width="26" height="26" viewBox="0 0 26 26"><path d="M6,21 L15,12" stroke="#fff" stroke-width="3.2"/><path d="M5,22.5 L10.5,17" stroke="#00f000" stroke-width="3.2"/><ellipse cx="5.5" cy="22.8" rx="1.8" ry="2.2" fill="#00f000"/><path d="M14,13.5 L19.5,8 L17,5.5 L11.5,11 Z" fill="#000"/><circle cx="20.5" cy="5.5" r="3.5" fill="#000"/></svg><svg style="left:620px;top:63px;" width="25" height="23" viewBox="0 0 25 23"><rect x="0.5" y="2.5" width="5" height="5" fill="#fff" stroke="#808080"/><rect x="7" y="1" width="17.5" height="7" fill="#c8c8c8" stroke="#000" stroke-width="1.3"/><polygon points="9,2.5 12,4.5 9,6.5" fill="#10b010"/><text x="13" y="7.5" font-size="6.5" font-family="Liberation Sans" font-weight="bold" fill="#2080e0">A</text><rect x="19" y="2.5" width="1.4" height="4" fill="#0000e0"/><rect x="21.5" y="2.5" width="1.4" height="4" fill="#0000e0"/><rect x="0.5" y="15.5" width="5" height="5" fill="#fff" stroke="#808080"/><path d="M1,18 L3,20 L6.5,14" stroke="#10a010" stroke-width="1.4" fill="none"/><rect x="7" y="14" width="17.5" height="7.5" fill="#c8c8c8" stroke="#000" stroke-width="1.3"/><polygon points="9,15.5 12,17.7 9,20" fill="#10b010"/><polygon points="17,15.5 14,17.7 17,20" fill="#2080e0"/><polygon points="19,15.5 22,17.7 19,20" fill="#2080e0"/></svg><svg style="left:694px;top:65px;" width="25" height="21" viewBox="0 0 25 21"><rect x="5.5" y="2.5" width="18" height="15" fill="#e0e0e0" stroke="#909090"/><rect x="9.5" y="0.5" width="14" height="13" fill="#e0e0e0" stroke="#909090"/><path d="M10,10 C12,6 13,6 15,9 C17,12 19,5 23,6" stroke="#20b020" stroke-width="1" fill="none"/><path d="M10,13 V8 H14 V13 H18 V8 H22" stroke="#1a80ff" stroke-width="1" fill="none"/><path d="M0.5,20.5 V9 H3 V12 H5 L5,14 H22 L19,20.5 Z" fill="#f8d888" stroke="#905010" stroke-width="1"/></svg><svg style="left:725px;top:62px;" width="24" height="25" viewBox="0 0 24 25"><rect x="0.5" y="4.5" width="23" height="19.5" fill="#e4e4e4" stroke="#808080"/><path d="M1,21.3 H4.8 V13.2 H9 V21.3 H14.5 V13.2 H20.5 V21.3 H23" stroke="#1a80ff" stroke-width="1.5" fill="none"/><path d="M1,16 C3,12 4,10.5 5.5,11 C7.5,12 8.5,19.5 11,19.5 C13.5,19.5 15,11 17.5,11 C19.5,11 21,15 23,18" stroke="#20b020" stroke-width="1.2" fill="none"/><text x="18" y="14.6" font-size="20" font-family="Liberation Sans" fill="#000" text-anchor="middle">1</text></svg><svg style="left:756px;top:62px;" width="24" height="25" viewBox="0 0 24 25"><rect x="0.5" y="4.5" width="23" height="19.5" fill="#e4e4e4" stroke="#808080"/><path d="M1,21.3 H4.8 V13.2 H9 V21.3 H14.5 V13.2 H20.5 V21.3 H23" stroke="#1a80ff" stroke-width="1.5" fill="none"/><path d="M1,16 C3,12 4,10.5 5.5,11 C7.5,12 8.5,19.5 11,19.5 C13.5,19.5 15,11 17.5,11 C19.5,11 21,15 23,18" stroke="#20b020" stroke-width="1.2" fill="none"/><text x="18" y="14.6" font-size="20" font-family="Liberation Sans" fill="#000" text-anchor="middle">2</text></svg><svg style="left:787px;top:62px;" width="24" height="25" viewBox="0 0 24 25"><rect x="0.5" y="4.5" width="23" height="19.5" fill="#fff" stroke="#c4c4c4"/><path d="M1,21.3 H4.8 V13.2 H9 V21.3 H14.5 V13.2 H20.5 V21.3 H23" stroke="#b0b0b0" stroke-width="1.5" fill="none"/><path d="M1,16 C3,12 4,10.5 5.5,11 C7.5,12 8.5,19.5 11,19.5 C13.5,19.5 15,11 17.5,11 C19.5,11 21,15 23,18" stroke="#b0b0b0" stroke-width="1.2" fill="none"/><text x="18" y="14.6" font-size="20" font-family="Liberation Sans" fill="#606060" text-anchor="middle">3</text></svg><svg style="left:818px;top:62px;" width="24" height="25" viewBox="0 0 24 25"><rect x="0.5" y="4.5" width="23" height="19.5" fill="#fff" stroke="#c4c4c4"/><path d="M1,21.3 H4.8 V13.2 H9 V21.3 H14.5 V13.2 H20.5 V21.3 H23" stroke="#b0b0b0" stroke-width="1.5" fill="none"/><path d="M1,16 C3,12 4,10.5 5.5,11 C7.5,12 8.5,19.5 11,19.5 C13.5,19.5 15,11 17.5,11 C19.5,11 21,15 23,18" stroke="#b0b0b0" stroke-width="1.2" fill="none"/><text x="18" y="14.6" font-size="20" font-family="Liberation Sans" fill="#606060" text-anchor="middle">4</text></svg><svg style="left:22px;top:100px;" width="14" height="24" viewBox="0 0 14 24"><polygon points="1,1.5 13,11.5 1,21.5" fill="#6aa6e6" stroke="#2a64b8" stroke-width="1.3" stroke-linejoin="round"/></svg><svg style="left:52px;top:100px;" width="16" height="24" viewBox="0 0 16 24"><path d="M1.5,1 L4.5,2.5 V21 L1.5,22.5 Z" fill="#6aa6e6" stroke="#2a64b8" stroke-width="1.2"/><polygon points="8,7.5 14,12 8,16.5" fill="#6aa6e6" stroke="#2a64b8" stroke-width="1.2"/></svg><svg style="left:79px;top:100px;" width="23" height="24" viewBox="0 0 23 24"><path d="M8.9,1.1 H13 L22.1,22.6 H18.1 L16.3,16.8 H5.6 L3.9,22.6 H0.1 Z M11,5.9 L14.5,13.2 H7.4 Z" fill="#6aa6e6" stroke="#1e5cb0" stroke-width="1.1" fill-rule="evenodd"/></svg><svg style="left:116px;top:100px;" width="22" height="24" viewBox="0 0 22 24"><polygon points="21,1 21,22 1,11.5" fill="#00d0d8" stroke="#1040c0" stroke-width="1.2"/></svg><svg style="left:190px;top:100px;" width="23" height="24" viewBox="0 0 23 24"><polygon points="1,1 1,22 22,11.5" fill="#00d0d8" stroke="#1040c0" stroke-width="1.2"/></svg><svg style="left:343px;top:100px;" width="25" height="25" viewBox="0 0 25 25"><path d="M9,1.5 H15.8 M12.4,1.5 V8.7 M0,12.5 H23.7" stroke="#a8a8a8" stroke-width="1"/><rect x="11" y="11" width="3" height="3" fill="#a0a0a0"/><polygon points="1.5,18.7 8.5,14.2 8.5,17 22.8,17 22.8,20.5 8.5,20.5 8.5,23.5" fill="#efefef" stroke="#c8c8c8" stroke-width="0.9"/></svg><svg style="left:452px;top:100px;" width="25" height="25" viewBox="0 0 25 25"><path d="M9,1.5 H16 M12.5,1.5 V9 M0,12.5 H24" stroke="#000" stroke-width="1"/><rect x="11" y="11" width="3" height="3" fill="#000"/><polygon points="1,17 15.5,17 15.5,14.3 23,19 15.5,23.7 15.5,21 1,21" fill="#10e0f0" stroke="#0848c8" stroke-width="1"/></svg><svg style="left:540px;top:100px;" width="21" height="25" viewBox="0 0 21 25"><path d="M2,22 H6 L14,3 H18.5" stroke="#505050" stroke-width="3.2" fill="none" stroke-linecap="round" stroke-linejoin="round"/></svg><svg style="left:575px;top:100px;" width="24" height="24" viewBox="0 0 24 24"><rect x="0.5" y="0.5" width="23" height="23" fill="#fff" stroke="#6a6a6a"/><rect x="1" y="1" width="22" height="3.5" fill="#e8e8e8"/><rect x="15" y="1.8" width="1.8" height="1.8" fill="#909090"/><rect x="17.8" y="1.8" width="1.8" height="1.8" fill="#909090"/><rect x="20.5" y="1.5" width="2.2" height="2.5" fill="#f08080"/><line x1="1" y1="4.8" x2="23" y2="4.8" stroke="#6a6a6a"/><rect x="2.5" y="8.5" width="19" height="10" fill="#fff" stroke="#6a6a6a"/><line x1="15.5" y1="8.5" x2="15.5" y2="18.5" stroke="#6a6a6a"/><polygon points="16.5,12 20.5,12 18.5,9.3" fill="#000"/><polygon points="16.5,15 20.5,15 18.5,17.7" fill="#000"/><line x1="16" y1="12.8" x2="21" y2="12.8" stroke="#c0c0c0" stroke-width="0.8"/><line x1="16" y1="14.2" x2="21" y2="14.2" stroke="#c0c0c0" stroke-width="0.8"/></svg><svg style="left:612px;top:100px;" width="24" height="17" viewBox="0 0 24 17"><rect x="0.5" y="0.5" width="23" height="16" fill="#e8e8e8" stroke="#787878"/><rect x="14.5" y="2" width="1.8" height="1.8" fill="#707070"/><rect x="17.3" y="2" width="1.8" height="1.8" fill="#707070"/><rect x="20" y="1.6" width="2.4" height="2.4" fill="#f09090"/><rect x="1.5" y="5.5" width="10" height="10" fill="#ff0000" stroke="#700000" stroke-width="1"/><rect x="12.5" y="5.5" width="10" height="10" fill="#00ff00" stroke="#006000" stroke-width="1"/><text x="6.5" y="12.3" font-size="4.5" font-family="Liberation Sans" fill="#600000" text-anchor="middle">CH1</text><text x="17.5" y="12.3" font-size="4.5" font-family="Liberation Sans" fill="#005000" text-anchor="middle">CH2</text></svg><svg style="left:653px;top:96px;" width="96" height="32" viewBox="0 0 96 32"><rect x="1.5" y="1.5" width="93" height="29" fill="#e4e4e4" stroke="#808080" stroke-width="3"/><path d="M0,29 H12 V10.5 H33 V29 H55 V10.5 H77 V29 H96" stroke="#1a80ff" stroke-width="4" fill="none"/><path d="M0,13 C5,5 9,3 13,3 C19,3 27,19 37,19 C46,19 53,3 61,3 C66,3 70,6 75,11" stroke="#109010" stroke-width="4" fill="none"/><polygon points="76,0 85,0 85,12 95.5,12 80.5,31 65.5,12 76,12" fill="#00d000" stroke="#fff" stroke-width="2.5" stroke-linejoin="miter"/></svg><svg style="left:87px;top:256px;" width="24" height="24" viewBox="0 0 24 24"><rect x="0.5" y="0.5" width="23" height="23" fill="#000" stroke="#707070"/><line x1="11.5" y1="2" x2="11.5" y2="22" stroke="#fff" stroke-width="1.2"/><path d="M2.5,12 L11.5,4 L21,8.5" stroke="#10e010" stroke-width="2" fill="none"/><text x="3" y="21" font-size="8.5" font-family="Liberation Sans" fill="#d0d0d0">0</text></svg><div style="left:116px;top:253px;width:1px;height:30px;background:#a0a0a0;"></div><svg style="left:124px;top:256px;" width="25" height="25" viewBox="0 0 25 25"><path d="M8,3.5 H24 M8,12.5 H24 M8,21.5 H24" stroke="#909090" stroke-width="1"/><rect x="0.5" y="1" width="8" height="4.5" fill="#00e000" stroke="#007000"/><rect x="0.5" y="10" width="8" height="4.5" fill="#00f0f0" stroke="#008080"/><rect x="0.5" y="19" width="8" height="4.5" fill="#2080ff" stroke="#000090"/><path d="M18.5,5 V20" stroke="#000" stroke-width="1"/><polygon points="16.5,6.5 18.5,3.5 20.5,6.5" fill="#000"/><polygon points="16.5,10.5 18.5,13.5 20.5,10.5" fill="#000"/><polygon points="16.5,14.5 18.5,11.5 20.5,14.5" fill="#000"/><polygon points="16.5,19.5 18.5,22.5 20.5,19.5" fill="#000"/></svg><div style="left:153px;top:253px;width:1px;height:30px;background:#a0a0a0;"></div><svg style="left:161px;top:257px;" width="24" height="23" viewBox="0 0 24 23"><rect x="0.5" y="0.5" width="23" height="22" fill="#fff" stroke="#808080"/><rect x="1" y="1" width="22" height="4" fill="#c0c0c0"/><path d="M6.5,1 V5 M12,1 V5 M17.5,1 V5" stroke="#e8e8e8" stroke-width="1"/><path d="M3,7.5 H9 M13,7.5 H16 M18,7.5 H21 M3,10.5 H9 M13,10.5 H16 M18,10.5 H21 M3,13.5 H9 M13,13.5 H16 M18,13.5 H21" stroke="#000" stroke-width="1.1"/><line x1="1" y1="16" x2="23" y2="16" stroke="#808080"/><path d="M3,19.5 H7 M9,19.5 H12 M14,19.5 H17 M19,19.5 H21" stroke="#000" stroke-width="1.1"/></svg><svg style="left:192px;top:256px;" width="24" height="24" viewBox="0 0 24 24"><rect x="0.5" y="0.5" width="23" height="23" fill="#000" stroke="#707070"/><path d="M5.5,2 V22 M18.5,2 V22" stroke="#fff" stroke-width="1.2"/><path d="M1.5,12 L12,3.5 L22.5,9" stroke="#10e010" stroke-width="2" fill="none"/></svg><svg style="left:223px;top:256px;" width="24" height="24" viewBox="0 0 24 24"><rect x="0.5" y="0.5" width="23" height="23" fill="#000" stroke="#707070"/><path d="M2,5.5 H22 M2,18.5 H22" stroke="#fff" stroke-width="1.2"/><path d="M1.5,12 L12,3.5 L22.5,9" stroke="#10e010" stroke-width="2" fill="none"/></svg><svg style="left:254px;top:256px;" width="24" height="24" viewBox="0 0 24 24"><rect x="0" y="0" width="24" height="24" fill="#a8a8a8"/><path d="M5.5,1 V23 M18.5,1 V23 M1,4.5 H23 M1,18.5 H23" stroke="#fff" stroke-width="1.3"/><circle cx="12" cy="12" r="4.5" fill="none" stroke="#c8c8c8" stroke-width="1.5"/></svg><div style="left:283px;top:253px;width:1px;height:30px;background:#a0a0a0;"></div><svg style="left:291px;top:256px;" width="25" height="25" viewBox="0 0 25 25"><path d="M14,14 L22,22" stroke="#f00000" stroke-width="3.2" stroke-linecap="round"/><circle cx="9" cy="8.5" r="7.3" fill="#e8ffff" stroke="#000" stroke-width="1.5"/><path d="M9,5 V12 M5.5,8.5 H12.5" stroke="#000" stroke-width="1.5"/></svg><svg style="left:322px;top:256px;" width="25" height="25" viewBox="0 0 25 25"><path d="M14,14 L22,22" stroke="#b4b4b4" stroke-width="3.2" stroke-linecap="round"/><circle cx="9" cy="8.5" r="7.3" fill="#fff" stroke="#b4b4b4" stroke-width="1.5"/><path d="M5.5,8.5 H12.5" stroke="#b4b4b4" stroke-width="1.2"/></svg><svg style="left:353px;top:256px;" width="25" height="25" viewBox="0 0 25 25"><path d="M14,14 L22,22" stroke="#f00000" stroke-width="3.2" stroke-linecap="round"/><circle cx="9" cy="8.5" r="7.3" fill="#e8ffff" stroke="#000" stroke-width="1.5"/><path d="M6,5 V12 M12,5 V12" stroke="#000" stroke-width="1.3"/><rect x="8.5" y="6" width="1.2" height="1.3" fill="#000"/><rect x="8.5" y="10" width="1.2" height="1.3" fill="#000"/></svg><div style="left:382px;top:253px;width:1px;height:30px;background:#a0a0a0;"></div><svg style="left:390px;top:256px;" width="25" height="24" viewBox="0 0 25 24"><path d="M4,21 L21,3 M4,3 L21,21" stroke="#d8d8d8" stroke-width="1.5"/><path d="M1,12 C6,5 18,5 24,12 C18,19 6,19 1,12 Z" fill="none" stroke="#b8b8b8" stroke-width="1.4"/><circle cx="12.5" cy="12" r="4" fill="#a8a8a8"/><circle cx="12.5" cy="12" r="1.3" fill="#e0e0e0"/></svg><svg style="left:749px;top:256px;" width="25" height="25" viewBox="0 0 25 25"><rect x="0.7" y="0.7" width="23" height="13" rx="2.5" fill="#f8f078" stroke="#000" stroke-width="1.2"/><text x="2.5" y="6" font-size="4.5" font-family="Liberation Sans" fill="#807000">Comment</text><text x="2.5" y="11" font-size="4.5" font-family="Liberation Sans" fill="#807000">Text</text><rect x="10" y="12.5" width="4" height="2" fill="#f00000"/><path d="M13.5,14 L21,21.5" stroke="#000" stroke-width="1.3"/><polygon points="24,24 24,17.5 17.5,24" fill="#000"/></svg><svg style="left:780px;top:257px;" width="25" height="23" viewBox="0 0 25 23"><rect x="1.5" y="4.5" width="21" height="14" rx="4" fill="#f0f0f0" stroke="#d0d0d0" stroke-width="1.2"/><path d="M3,2 L21,21 M21,2 L3,21" stroke="#c8c8c8" stroke-width="3"/></svg><div style="left:809px;top:253px;width:1px;height:30px;background:#a0a0a0;"></div><svg style="left:817px;top:256px;" width="24" height="24" viewBox="0 0 24 24"><rect x="0" y="0" width="24" height="24" fill="#000"/><rect x="2" y="3" width="2.5" height="3" fill="#00e000"/><rect x="2" y="9" width="2.5" height="3" fill="#00e0e0"/><text x="6" y="8" font-size="6.5" font-family="Liberation Sans" fill="#e0e0e0">Ch1</text><text x="6" y="13.5" font-size="6.5" font-family="Liberation Sans" fill="#e0e0e0">Ch2</text></svg><svg style="left:848px;top:256px;" width="24" height="24" viewBox="0 0 24 24"><rect x="0" y="0" width="24" height="24" fill="#000"/><path d="M1.5,13 C4,7 6,2 8.5,4 C11,6 13,14 16,15 C18,16 20,13 22,11" stroke="#10e010" stroke-width="1.6" fill="none"/><path d="M1.5,14 C4,20 8,21 11,18 C14,14 17,12 20,14 C21,15 22,16 22.5,16" stroke="#10e0f0" stroke-width="1.6" fill="none"/></svg><svg style="left:879px;top:256px;" width="24" height="24" viewBox="0 0 24 24"><rect x="0.5" y="0.5" width="23" height="23" fill="#fafafa" stroke="#d0d0d0"/><rect x="1" y="1" width="22" height="3" fill="#ececec"/><rect x="2" y="12" width="12" height="10" fill="#b0b0b0"/><path d="M3.5,17 C5,13 7,13 8,17 C9,21 11,21 12.5,17" stroke="#e0e0e0" stroke-width="1" fill="none"/><path d="M13,11 L20,5 M16,5 H20 V9" stroke="#b0b0b0" stroke-width="1.2" fill="none"/></svg><svg style="left:906px;top:253px;" width="28" height="28" viewBox="0 0 28 28"><ellipse cx="19.5" cy="21.5" rx="6" ry="3.8" fill="none" stroke="#e4e4e4" stroke-width="0.8" stroke-dasharray="1.5,1"/><polygon points="4,3 7.6,3 13.8,9.2 8.5,14.5 4,10.5" fill="#e09020" stroke="#704000" stroke-width="0.9"/><path d="M5.5,5 L11.5,11 M4.8,7.5 L9.8,12.5" stroke="#f0a060" stroke-width="1"/><polygon points="8.5,14.5 13.8,9.2 19,14.5 13.7,19.8" fill="#c8c8c8" stroke="#000" stroke-width="1.1"/><polygon points="13.7,19.8 19,14.5 21,16.8 16,21.8" fill="#c00000" stroke="#800000" stroke-width="0.8"/></svg><svg style="left:941px;top:257px;" width="24" height="23" viewBox="0 0 24 23"><path d="M3,3 L21,20 M21,3 L3,20" stroke="#b4b4b4" stroke-width="5.2" stroke-linecap="square"/><path d="M3,3 L21,20 M21,3 L3,20" stroke="#d8d8d8" stroke-width="3.4" stroke-linecap="square"/></svg><span style="left:968.50px;top:262.80px;font-size:15px;line-height:15px;color:#000040;font-weight:bold;transform:scaleX(0.8392);">1</span></body></html>
